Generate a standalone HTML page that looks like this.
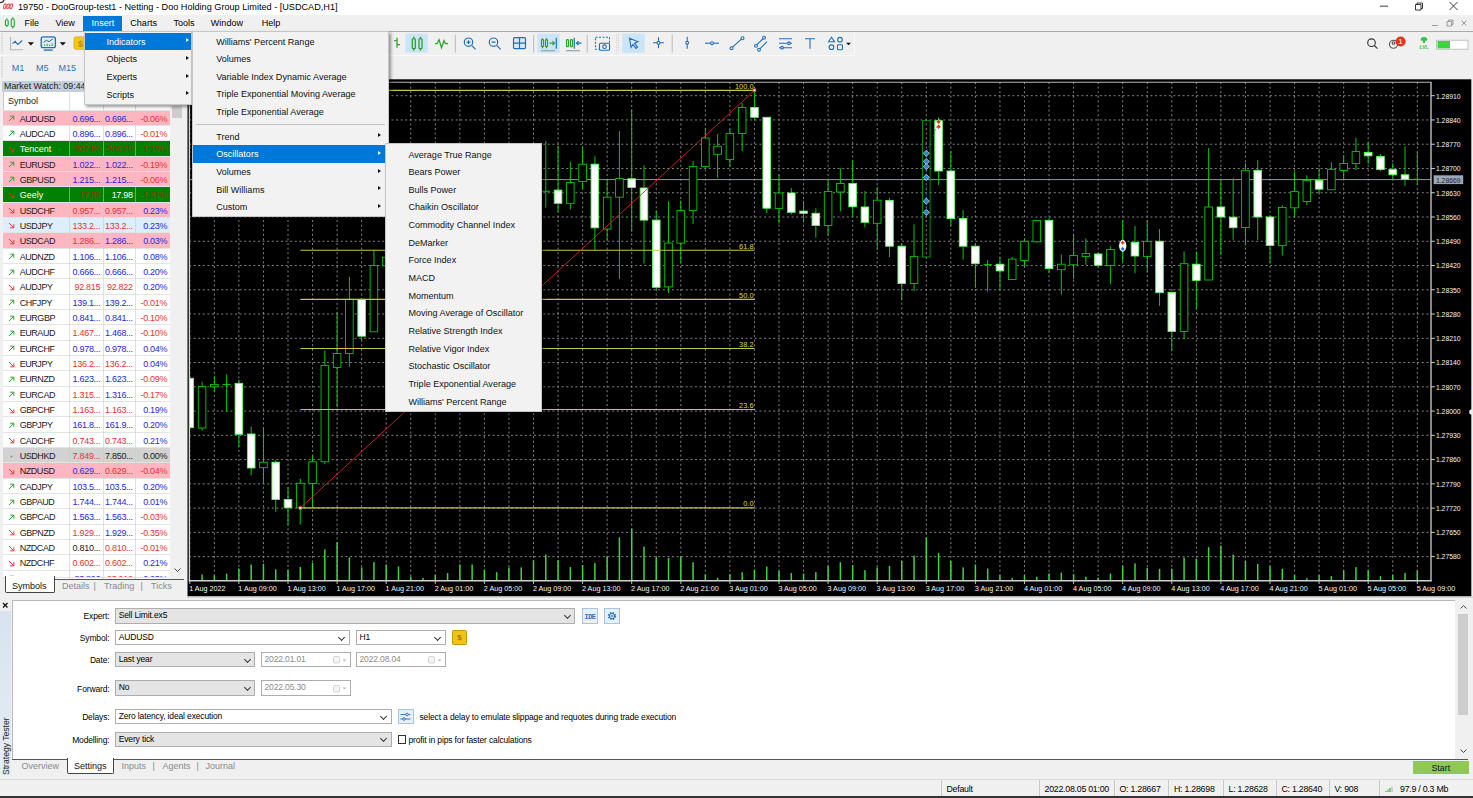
<!DOCTYPE html><html><head><meta charset="utf-8"><title>MetaTrader 5</title><style>

html,body{margin:0;padding:0}
body{width:1473px;height:798px;position:relative;overflow:hidden;background:#f0f0f0;font-family:"Liberation Sans",sans-serif;font-size:9px;color:#000}
div,span{box-sizing:border-box}
.abs{position:absolute}
.t{position:absolute;white-space:nowrap;line-height:12px}
#title{left:0;top:0;width:1473px;height:15px;background:#fff}
#menubar{left:0;top:14.5px;width:1473px;height:16px;background:#f0f0f0}
.mi{position:absolute;top:0;height:16px;line-height:16.5px;font-size:9.05px;white-space:nowrap}
.menu{position:absolute;background:#f2f2f2;border:1px solid #c6c6c6;box-shadow:2px 2px 3px rgba(0,0,0,.4)}
.menu .it{position:absolute;left:0;right:0;height:17.7px;line-height:19px;font-size:9.05px;white-space:nowrap;color:#111}
.menu .it.sel{background:#0078d7;color:#fff}
.menu .it i{position:absolute;right:2.7px;top:5.6px;width:0;height:0;border-left:3.8px solid #111;border-top:2.8px solid transparent;border-bottom:2.8px solid transparent}
.menu .it.sel i{border-left-color:#fff}
.menu.m2 .it i{right:6.9px}
.menu .sep{position:absolute;left:3px;right:3px;height:1px;background:#c4c4c4}
#mw{left:0;top:79px;width:187px;height:518px;background:#f0f0f0}
.mwr{position:absolute;left:2.7px;width:167px;height:15.34px;border-bottom:1px solid #e4e4e4}
.mwr span{position:absolute;top:0;line-height:16.6px;font-size:9px;white-space:nowrap}
.mwr span.s{letter-spacing:-0.45px}
.mwr span.n{letter-spacing:-0.3px}
.cmb{position:absolute;height:15.2px;border:1px solid #adadad;background:#e4e4e4;font-size:8.5px;letter-spacing:-0.14px;line-height:13.2px;padding-left:3px;white-space:nowrap}
.lbl{position:absolute;font-size:8.5px;letter-spacing:-0.14px;line-height:12px;white-space:nowrap;text-align:right}
.chev{position:absolute;right:4.5px;top:3.8px;width:4px;height:4px;border-right:1px solid #333;border-bottom:1px solid #333;transform:rotate(45deg)}
.st{position:absolute;top:0;height:18px;line-height:18px;font-size:8.8px;letter-spacing:-0.25px;white-space:nowrap;border-left:1px solid #c8c8c8;padding-left:5px}

</style></head><body>
<div id="title" class="abs">
<svg class="abs" style="left:0;top:0" width="16" height="14" viewBox="0 0 16 14"><path d="M0 2.6A4.2 4.2 0 0 0 4.2 -0.6" stroke="#333" stroke-width="1.3" fill="none"/><g fill="none" stroke="#e8555a" stroke-width="1.2" transform="skewX(-14)"><ellipse cx="6.4" cy="6.3" rx="1.2" ry="2.4"/><ellipse cx="9.6" cy="6.3" rx="1.2" ry="2.4"/><ellipse cx="12.8" cy="6.3" rx="1.2" ry="2.4"/></g></svg>
<span class="t" id="ttl" style="left:18px;top:1px;font-size:9.15px;color:#000">19750 - DooGroup-test1 - Netting - Doo Holding Group Limited - [USDCAD,H1]</span>
<svg class="abs" style="left:1370px;top:0" width="103" height="14" viewBox="0 0 103 14"><g stroke="#222" stroke-width="0.9" fill="none"><path d="M10 6.2h8"/><path d="M45.5 4.5h5.5v5.5h-5.5z M47 4.5v-1.5h5.5v5.5h-1.5" /><path d="M79.5 2l8 8 M87.5 2l-8 8"/></g></svg>
</div>
<div id="menubar" class="abs">
<svg class="abs" style="left:2px;top:1.5px" width="15" height="14" viewBox="0 0 15 14"><g stroke="#2fa84a" stroke-width="1.2" fill="none"><rect x="3.4" y="4" width="2.8" height="5.6" rx="1"/><path d="M4.8 2.6v1.4M4.8 9.6v1.4"/><rect x="9.3" y="3" width="3" height="7.6" rx="1"/><path d="M10.8 1.2v1.8M10.8 10.6v1.8"/></g></svg>
<span class="mi" style="left:24.4px">File</span>
<span class="mi" style="left:55.4px">View</span>
<span class="mi" style="left:130.3px">Charts</span>
<span class="mi" style="left:173.5px">Tools</span>
<span class="mi" style="left:210.8px">Window</span>
<span class="mi" style="left:261.7px">Help</span>
<span class="mi" style="left:83px;width:39px;background:#0078d7;color:#fff;top:1px;height:15px;line-height:14.5px;padding-left:8.6px">Insert</span>
<svg class="abs" style="left:1425px;top:1px" width="48" height="14" viewBox="0 0 48 14"><g stroke="#9a9a9a" stroke-width="1" fill="none"><path d="M7 9.5h6"/><path d="M22 5.5h4.5v4.5h-4.5z M23.5 5.5v-1.5h4.5v4.5h-1.5"/><path d="M36.5 4.5l5 5M41.5 4.5l-5 5"/></g></svg>
</div>
<div class="abs" style="left:0;top:30.5px;width:1473px;height:1px;background:#a9a9a9"></div>
<div class="abs" style="left:0;top:55px;width:855px;height:1px;background:#fafafa"></div>
<svg class="abs" style="left:0;top:31px" width="1473" height="48" viewBox="0 31 1473 48">
<rect x="405.4" y="33.6" width="22.4" height="19.2" fill="#cce4f7"/>
<rect x="537.3" y="33.6" width="22.4" height="19.2" fill="#cce4f7"/>
<rect x="622.3" y="33.6" width="22.4" height="19.2" fill="#cce4f7"/>
<path d="M2 33.5v19M2 57.5v19.5" stroke="#b0b0b0" stroke-width="1" stroke-dasharray="1 1.3"/>
<g transform="translate(0,0.7)">
<g fill="none" stroke-width="1.1"><path d="M10.6 36.2v12.8h12.6" stroke="#b4b4b4"/><path d="M12.6 43l2.6-2.4 2.6 3.2 4.4-4" stroke="#1f6fb8"/><path d="M27.8 41.6h6.2l-3.1 3.3z" fill="#111" stroke="none"/>
<rect x="41.2" y="36.2" width="14.2" height="10.8" rx="2" fill="#dcecf9" stroke="#1f6fb8" stroke-width="1.3"/><path d="M43.6 41.6l2.8-2 2.6 1.4 4-3" stroke="#34506a" stroke-width="0.9"/><path d="M44.6 45.3v-1.5M47.1 45.3v-2.2M49.6 45.3v-1.3M52.1 45.3v-2.6" stroke="#2ea12e" stroke-width="1"/><path d="M43.8 49.4h9" stroke="#1f6fb8" stroke-width="1.3"/><path d="M59.7 41.6h6.2l-3.1 3.3z" fill="#111" stroke="none"/></g>
<rect x="74" y="36.2" width="13" height="12.4" rx="2" fill="#f5c518" stroke="#d9a80c" stroke-width="0.8"/>
<text x="80.5" y="46" font-size="9" font-weight="bold" fill="#c08a00" text-anchor="middle" font-family='"Liberation Sans",sans-serif'>$</text>
<g fill="none" stroke="#2ea12e" stroke-width="1.3"><path d="M397 37v10M394 40h3M397 44h3"/>
<rect x="412.3" y="38" width="3" height="10" rx="1"/><path d="M413.8 36v2M413.8 48v2"/><rect x="419" y="38" width="3" height="10" rx="1"/><path d="M420.5 36v2M420.5 48v2"/>
<path d="M435 43h2l2-4 2.5 8 2.5-7 1.5 3h2.5"/></g>
<path d="M455.3 34v18M533.7 34v18M587.2 34v18M672.2 34v18" stroke="#b4b4b4" stroke-width="0.9"/>
<path d="M616.5 34v18M618.5 34v18" stroke="#c0c0c0" stroke-width="0.8" stroke-dasharray="1 1.5"/>
<g fill="none" stroke="#1f6fb8" stroke-width="1.2"><circle cx="468.5" cy="41.5" r="4.2"/><path d="M471.6 44.6l4 4M466.5 41.5h4M468.5 39.5v4"/>
<circle cx="493.5" cy="41.5" r="4.2"/><path d="M496.6 44.6l4 4M491.5 41.5h4"/>
<rect x="513.5" y="37" width="12" height="11" rx="1.2" fill="#d5e9f8"/><path d="M519.5 37v11M513.5 42.5h12"/></g>
<g fill="none" stroke="#2ea12e" stroke-width="1.2"><rect x="541.5" y="39" width="2" height="7" rx="0.8"/><path d="M542.5 37.5v1.5M542.5 46v1.5"/><rect x="545.5" y="39" width="2" height="7" rx="0.8"/><path d="M546.5 37.5v1.5M546.5 46v1.5"/><path d="M549.5 42.5h5M552.5 40.5l2 2-2 2" /><path d="M556.3 37v11" stroke="#1f6fb8"/><path d="M541 50h14" stroke="#8aa"/>
<rect x="566.5" y="39" width="2" height="7" rx="0.8"/><rect x="570.5" y="39" width="2" height="7" rx="0.8"/><path d="M574.3 37v11" stroke="#1f6fb8"/><path d="M576.5 42.5h5M578.5 40.5l-2 2 2 2" stroke="#1f6fb8"/><path d="M566 50h14" stroke="#8aa"/></g>
<g fill="none" stroke="#1f6fb8" stroke-width="1.1"><rect x="595.5" y="36.5" width="14" height="12" stroke-dasharray="2 1.5"/><rect x="599.5" y="42.5" width="10" height="7" rx="1" fill="#f0f0f0"/><circle cx="604.5" cy="46" r="1.8"/></g>
<g fill="none" stroke="#1f6fb8" stroke-width="1.1"><path d="M629.5 37.5l8.5 3.5-3.5 1.5 3 4-1.5 1.2-3-4-2 3z" fill="#d5e9f8"/><path d="M658.5 36.5v11M653 42h11"/><circle cx="658.5" cy="42" r="1.5" fill="#f0f0f0"/>
<path d="M687.2 36v12"/><circle cx="687.2" cy="42" r="1.4" fill="#f0f0f0"/><path d="M705 42.5h14"/><circle cx="712" cy="42.5" r="1.4" fill="#f0f0f0"/>
<path d="M731.5 47.5l11-10"/><circle cx="731.5" cy="47.5" r="1.5" fill="#f0f0f0"/><circle cx="742.5" cy="37.5" r="1.5" fill="#f0f0f0"/>
<path d="M756 45l8-8M759 49l8-8"/><circle cx="756" cy="45" r="1.4" fill="#f0f0f0"/><circle cx="764" cy="37" r="1.4" fill="#f0f0f0"/><circle cx="759" cy="49" r="1.4" fill="#f0f0f0"/>
<path d="M779 38h13M779 42.5h13M779 47h13"/><circle cx="789" cy="42.5" r="1.3" fill="#f0f0f0"/><circle cx="782" cy="47" r="1.3" fill="#f0f0f0"/>
<path d="M805 38h10M810 38v10"/>
<path d="M828.5 41l3-4.5 3 4.5z"/><circle cx="840" cy="39" r="2.3"/><circle cx="831.5" cy="46.5" r="2.3"/><rect x="837.5" y="44" width="5" height="5" rx="0.8"/></g>
<path d="M846 42l2.5 2.5 2.5-2.5z" fill="#111"/>
<path d="M854.5 32v22" stroke="#fafafa" stroke-width="1"/>
<g fill="none" stroke="#333" stroke-width="1.1"><circle cx="1371.5" cy="42" r="3.8"/><path d="M1374.3 44.8l3.2 3.2"/><circle cx="1393.5" cy="43.5" r="4" stroke="#555"/><circle cx="1393.5" cy="42.3" r="1.3" stroke="#555"/></g>
<circle cx="1400.6" cy="40.8" r="5.1" fill="#e8321e"/><text x="1400.5" y="43.7" font-size="8" fill="#fff" text-anchor="middle" font-family='"Liberation Sans",sans-serif'>1</text>
<path d="M1424 36.2c-2 0-3.4 1.3-3.4 2.9 0 .5.3.9.8.9h1.5v2.4h2.2v-2.4h1.5c.5 0 .8-.4.8-.9 0-1.6-1.4-2.9-3.4-2.9z" fill="#35c24a"/><text x="1424" y="48.3" font-size="5" fill="#35c24a" text-anchor="middle" font-weight="bold" font-family='"Liberation Sans",sans-serif'>LVL</text>
<rect x="1436.5" y="39.5" width="31.5" height="9" fill="#fff" stroke="#b5b5b5" stroke-width="0.8"/><rect x="1437.5" y="40.3" width="12.5" height="7.4" fill="#3fd23f"/>
</g></svg>
<span class="t" style="left:11.8px;top:61.6px;font-size:9.05px;color:#2476b6">M1</span>
<span class="t" style="left:36px;top:61.6px;font-size:9.05px;color:#2476b6">M5</span>
<span class="t" style="left:58.5px;top:61.6px;font-size:9.05px;color:#2476b6">M15</span>
<div id="mw" class="abs">
<div class="abs" style="left:2px;top:1.8px;width:184px;height:11.6px;background:#c3cfdc"></div>
<span class="t" style="left:4px;top:0.7px;font-size:8.9px;color:#222">Market Watch: 09:44:22</span>
<div class="abs" style="left:2.7px;top:13.3px;width:181px;height:487px;background:#fff;border-left:1px solid #c8c8c8"></div>
<span class="t" style="left:8px;top:16px;font-size:9px;color:#222">Symbol</span>
<div class="abs" style="left:2.7px;top:31px;width:167px;height:1px;background:#e4e4e4"></div>
<div class="mwr" style="top:31.60px;background:#ffb6c1;height:15.34px;overflow:hidden"><svg class="abs" style="left:5.5px;top:4.5px" width="7" height="7" viewBox="0 0 7 7"><path d="M1 6L5.6 1.4M2.2 1.2h3.6v3.6" stroke="#2ea12e" stroke-width="1" fill="none"/></svg><span class="s" style="left:17px;color:#1a1a1a">AUDUSD</span><span class="n" style="right:69.5px;color:#2828dc">0.696...</span><span class="n" style="right:37px;color:#2828dc">0.696...</span><span class="n" style="right:2.5px;color:#e63232">-0.06%</span></div>
<div class="mwr" style="top:46.94px;background:#ffffff;height:15.34px;overflow:hidden"><svg class="abs" style="left:5.5px;top:4.5px" width="7" height="7" viewBox="0 0 7 7"><path d="M1 6L5.6 1.4M2.2 1.2h3.6v3.6" stroke="#2ea12e" stroke-width="1" fill="none"/></svg><span class="s" style="left:17px;color:#1a1a1a">AUDCAD</span><span class="n" style="right:69.5px;color:#2828dc">0.896...</span><span class="n" style="right:37px;color:#2828dc">0.896...</span><span class="n" style="right:2.5px;color:#e63232">-0.01%</span></div>
<div class="mwr" style="top:62.28px;background:#008000;height:15.34px;overflow:hidden"><svg class="abs" style="left:5.5px;top:4.5px" width="7" height="7" viewBox="0 0 7 7"><path d="M1 1L5.6 5.6M2.2 5.8h3.6v-3.6" stroke="#a8500f" stroke-width="1" fill="none"/></svg><span class="" style="left:17px;color:#fff">Tencent</span><span class="n" style="right:69.5px;color:#8b3a0e">307.80</span><span class="n" style="right:37px;color:#8b3a0e">308.20</span><span class="n" style="right:2.5px;color:#8b3a0e">-1.19%</span></div>
<div class="mwr" style="top:77.62px;background:#ffb6c1;height:15.34px;overflow:hidden"><svg class="abs" style="left:5.5px;top:4.5px" width="7" height="7" viewBox="0 0 7 7"><path d="M1 6L5.6 1.4M2.2 1.2h3.6v3.6" stroke="#2ea12e" stroke-width="1" fill="none"/></svg><span class="s" style="left:17px;color:#1a1a1a">EURUSD</span><span class="n" style="right:69.5px;color:#2828dc">1.022...</span><span class="n" style="right:37px;color:#2828dc">1.022...</span><span class="n" style="right:2.5px;color:#e63232">-0.19%</span></div>
<div class="mwr" style="top:92.96px;background:#ffb6c1;height:15.34px;overflow:hidden"><svg class="abs" style="left:5.5px;top:4.5px" width="7" height="7" viewBox="0 0 7 7"><path d="M1 6L5.6 1.4M2.2 1.2h3.6v3.6" stroke="#2ea12e" stroke-width="1" fill="none"/></svg><span class="s" style="left:17px;color:#1a1a1a">GBPUSD</span><span class="n" style="right:69.5px;color:#2828dc">1.215...</span><span class="n" style="right:37px;color:#2828dc">1.215...</span><span class="n" style="right:2.5px;color:#e63232">-0.06%</span></div>
<div class="mwr" style="top:108.30px;background:#008000;height:15.34px;overflow:hidden"><svg class="abs" style="left:5.5px;top:4.5px" width="7" height="7" viewBox="0 0 7 7"><path d="M1 1L5.6 5.6M2.2 5.8h3.6v-3.6" stroke="#a8500f" stroke-width="1" fill="none"/></svg><span class="" style="left:17px;color:#fff">Geely</span><span class="n" style="right:69.5px;color:#8b3a0e">17.86</span><span class="n" style="right:37px;color:#ffffff">17.98</span><span class="n" style="right:2.5px;color:#8b3a0e">-1.81%</span></div>
<div class="mwr" style="top:123.64px;background:#ffb6c1;height:15.34px;overflow:hidden"><svg class="abs" style="left:5.5px;top:4.5px" width="7" height="7" viewBox="0 0 7 7"><path d="M1 1L5.6 5.6M2.2 5.8h3.6v-3.6" stroke="#e03c3c" stroke-width="1" fill="none"/></svg><span class="s" style="left:17px;color:#1a1a1a">USDCHF</span><span class="n" style="right:69.5px;color:#e63232">0.957...</span><span class="n" style="right:37px;color:#e63232">0.957...</span><span class="n" style="right:2.5px;color:#2828dc">0.23%</span></div>
<div class="mwr" style="top:138.98px;background:#ddeeff;height:15.34px;overflow:hidden"><svg class="abs" style="left:5.5px;top:4.5px" width="7" height="7" viewBox="0 0 7 7"><path d="M1 1L5.6 5.6M2.2 5.8h3.6v-3.6" stroke="#e03c3c" stroke-width="1" fill="none"/></svg><span class="s" style="left:17px;color:#1a1a1a">USDJPY</span><span class="n" style="right:69.5px;color:#e63232">133.2...</span><span class="n" style="right:37px;color:#e63232">133.2...</span><span class="n" style="right:2.5px;color:#2828dc">0.23%</span></div>
<div class="mwr" style="top:154.32px;background:#ffb6c1;height:15.34px;overflow:hidden"><svg class="abs" style="left:5.5px;top:4.5px" width="7" height="7" viewBox="0 0 7 7"><path d="M1 1L5.6 5.6M2.2 5.8h3.6v-3.6" stroke="#e03c3c" stroke-width="1" fill="none"/></svg><span class="s" style="left:17px;color:#1a1a1a">USDCAD</span><span class="n" style="right:69.5px;color:#e63232">1.286...</span><span class="n" style="right:37px;color:#2828dc">1.286...</span><span class="n" style="right:2.5px;color:#2828dc">0.03%</span></div>
<div class="mwr" style="top:169.66px;background:#ffffff;height:15.34px;overflow:hidden"><svg class="abs" style="left:5.5px;top:4.5px" width="7" height="7" viewBox="0 0 7 7"><path d="M1 6L5.6 1.4M2.2 1.2h3.6v3.6" stroke="#2ea12e" stroke-width="1" fill="none"/></svg><span class="s" style="left:17px;color:#1a1a1a">AUDNZD</span><span class="n" style="right:69.5px;color:#2828dc">1.106...</span><span class="n" style="right:37px;color:#2828dc">1.106...</span><span class="n" style="right:2.5px;color:#2828dc">0.08%</span></div>
<div class="mwr" style="top:185.00px;background:#ffffff;height:15.34px;overflow:hidden"><svg class="abs" style="left:5.5px;top:4.5px" width="7" height="7" viewBox="0 0 7 7"><path d="M1 6L5.6 1.4M2.2 1.2h3.6v3.6" stroke="#2ea12e" stroke-width="1" fill="none"/></svg><span class="s" style="left:17px;color:#1a1a1a">AUDCHF</span><span class="n" style="right:69.5px;color:#2828dc">0.666...</span><span class="n" style="right:37px;color:#2828dc">0.666...</span><span class="n" style="right:2.5px;color:#2828dc">0.20%</span></div>
<div class="mwr" style="top:200.34px;background:#ffffff;height:15.34px;overflow:hidden"><svg class="abs" style="left:5.5px;top:4.5px" width="7" height="7" viewBox="0 0 7 7"><path d="M1 1L5.6 5.6M2.2 5.8h3.6v-3.6" stroke="#e03c3c" stroke-width="1" fill="none"/></svg><span class="s" style="left:17px;color:#1a1a1a">AUDJPY</span><span class="n" style="right:69.5px;color:#e63232">92.815</span><span class="n" style="right:37px;color:#e63232">92.822</span><span class="n" style="right:2.5px;color:#2828dc">0.20%</span></div>
<div class="mwr" style="top:215.68px;background:#ffffff;height:15.34px;overflow:hidden"><svg class="abs" style="left:5.5px;top:4.5px" width="7" height="7" viewBox="0 0 7 7"><path d="M1 6L5.6 1.4M2.2 1.2h3.6v3.6" stroke="#2ea12e" stroke-width="1" fill="none"/></svg><span class="s" style="left:17px;color:#1a1a1a">CHFJPY</span><span class="n" style="right:69.5px;color:#2828dc">139.1...</span><span class="n" style="right:37px;color:#2828dc">139.2...</span><span class="n" style="right:2.5px;color:#e63232">-0.01%</span></div>
<div class="mwr" style="top:231.02px;background:#ffffff;height:15.34px;overflow:hidden"><svg class="abs" style="left:5.5px;top:4.5px" width="7" height="7" viewBox="0 0 7 7"><path d="M1 6L5.6 1.4M2.2 1.2h3.6v3.6" stroke="#2ea12e" stroke-width="1" fill="none"/></svg><span class="s" style="left:17px;color:#1a1a1a">EURGBP</span><span class="n" style="right:69.5px;color:#2828dc">0.841...</span><span class="n" style="right:37px;color:#2828dc">0.841...</span><span class="n" style="right:2.5px;color:#e63232">-0.10%</span></div>
<div class="mwr" style="top:246.36px;background:#ffffff;height:15.34px;overflow:hidden"><svg class="abs" style="left:5.5px;top:4.5px" width="7" height="7" viewBox="0 0 7 7"><path d="M1 6L5.6 1.4M2.2 1.2h3.6v3.6" stroke="#2ea12e" stroke-width="1" fill="none"/></svg><span class="s" style="left:17px;color:#1a1a1a">EURAUD</span><span class="n" style="right:69.5px;color:#e63232">1.467...</span><span class="n" style="right:37px;color:#2828dc">1.468...</span><span class="n" style="right:2.5px;color:#e63232">-0.10%</span></div>
<div class="mwr" style="top:261.70px;background:#ffffff;height:15.34px;overflow:hidden"><svg class="abs" style="left:5.5px;top:4.5px" width="7" height="7" viewBox="0 0 7 7"><path d="M1 6L5.6 1.4M2.2 1.2h3.6v3.6" stroke="#2ea12e" stroke-width="1" fill="none"/></svg><span class="s" style="left:17px;color:#1a1a1a">EURCHF</span><span class="n" style="right:69.5px;color:#2828dc">0.978...</span><span class="n" style="right:37px;color:#2828dc">0.978...</span><span class="n" style="right:2.5px;color:#2828dc">0.04%</span></div>
<div class="mwr" style="top:277.04px;background:#ffffff;height:15.34px;overflow:hidden"><svg class="abs" style="left:5.5px;top:4.5px" width="7" height="7" viewBox="0 0 7 7"><path d="M1 1L5.6 5.6M2.2 5.8h3.6v-3.6" stroke="#e03c3c" stroke-width="1" fill="none"/></svg><span class="s" style="left:17px;color:#1a1a1a">EURJPY</span><span class="n" style="right:69.5px;color:#e63232">136.2...</span><span class="n" style="right:37px;color:#e63232">136.2...</span><span class="n" style="right:2.5px;color:#2828dc">0.04%</span></div>
<div class="mwr" style="top:292.38px;background:#ffffff;height:15.34px;overflow:hidden"><svg class="abs" style="left:5.5px;top:4.5px" width="7" height="7" viewBox="0 0 7 7"><path d="M1 6L5.6 1.4M2.2 1.2h3.6v3.6" stroke="#2ea12e" stroke-width="1" fill="none"/></svg><span class="s" style="left:17px;color:#1a1a1a">EURNZD</span><span class="n" style="right:69.5px;color:#2828dc">1.623...</span><span class="n" style="right:37px;color:#2828dc">1.623...</span><span class="n" style="right:2.5px;color:#e63232">-0.09%</span></div>
<div class="mwr" style="top:307.72px;background:#ffffff;height:15.34px;overflow:hidden"><svg class="abs" style="left:5.5px;top:4.5px" width="7" height="7" viewBox="0 0 7 7"><path d="M1 6L5.6 1.4M2.2 1.2h3.6v3.6" stroke="#2ea12e" stroke-width="1" fill="none"/></svg><span class="s" style="left:17px;color:#1a1a1a">EURCAD</span><span class="n" style="right:69.5px;color:#e63232">1.315...</span><span class="n" style="right:37px;color:#2828dc">1.316...</span><span class="n" style="right:2.5px;color:#e63232">-0.17%</span></div>
<div class="mwr" style="top:323.06px;background:#ffffff;height:15.34px;overflow:hidden"><svg class="abs" style="left:5.5px;top:4.5px" width="7" height="7" viewBox="0 0 7 7"><path d="M1 1L5.6 5.6M2.2 5.8h3.6v-3.6" stroke="#e03c3c" stroke-width="1" fill="none"/></svg><span class="s" style="left:17px;color:#1a1a1a">GBPCHF</span><span class="n" style="right:69.5px;color:#e63232">1.163...</span><span class="n" style="right:37px;color:#e63232">1.163...</span><span class="n" style="right:2.5px;color:#2828dc">0.19%</span></div>
<div class="mwr" style="top:338.40px;background:#ffffff;height:15.34px;overflow:hidden"><svg class="abs" style="left:5.5px;top:4.5px" width="7" height="7" viewBox="0 0 7 7"><path d="M1 6L5.6 1.4M2.2 1.2h3.6v3.6" stroke="#2ea12e" stroke-width="1" fill="none"/></svg><span class="s" style="left:17px;color:#1a1a1a">GBPJPY</span><span class="n" style="right:69.5px;color:#2828dc">161.8...</span><span class="n" style="right:37px;color:#2828dc">161.9...</span><span class="n" style="right:2.5px;color:#2828dc">0.20%</span></div>
<div class="mwr" style="top:353.74px;background:#ffffff;height:15.34px;overflow:hidden"><svg class="abs" style="left:5.5px;top:4.5px" width="7" height="7" viewBox="0 0 7 7"><path d="M1 1L5.6 5.6M2.2 5.8h3.6v-3.6" stroke="#e03c3c" stroke-width="1" fill="none"/></svg><span class="s" style="left:17px;color:#1a1a1a">CADCHF</span><span class="n" style="right:69.5px;color:#e63232">0.743...</span><span class="n" style="right:37px;color:#e63232">0.743...</span><span class="n" style="right:2.5px;color:#2828dc">0.21%</span></div>
<div class="mwr" style="top:369.08px;background:#d2d2d2;height:15.34px;overflow:hidden"><svg class="abs" style="left:5.5px;top:4.5px" width="7" height="7" viewBox="0 0 7 7"><circle cx="3.5" cy="3.5" r="1" fill="#888"/></svg><span class="s" style="left:17px;color:#1a1a1a">USDHKD</span><span class="n" style="right:69.5px;color:#e63232">7.849...</span><span class="n" style="right:37px;color:#202020">7.850...</span><span class="n" style="right:2.5px;color:#202020">0.00%</span></div>
<div class="mwr" style="top:384.42px;background:#ffb6c1;height:15.34px;overflow:hidden"><svg class="abs" style="left:5.5px;top:4.5px" width="7" height="7" viewBox="0 0 7 7"><path d="M1 1L5.6 5.6M2.2 5.8h3.6v-3.6" stroke="#e03c3c" stroke-width="1" fill="none"/></svg><span class="s" style="left:17px;color:#1a1a1a">NZDUSD</span><span class="n" style="right:69.5px;color:#2828dc">0.629...</span><span class="n" style="right:37px;color:#e63232">0.629...</span><span class="n" style="right:2.5px;color:#e63232">-0.04%</span></div>
<div class="mwr" style="top:399.76px;background:#ffffff;height:15.34px;overflow:hidden"><svg class="abs" style="left:5.5px;top:4.5px" width="7" height="7" viewBox="0 0 7 7"><path d="M1 6L5.6 1.4M2.2 1.2h3.6v3.6" stroke="#2ea12e" stroke-width="1" fill="none"/></svg><span class="s" style="left:17px;color:#1a1a1a">CADJPY</span><span class="n" style="right:69.5px;color:#2828dc">103.5...</span><span class="n" style="right:37px;color:#2828dc">103.5...</span><span class="n" style="right:2.5px;color:#2828dc">0.20%</span></div>
<div class="mwr" style="top:415.10px;background:#ffffff;height:15.34px;overflow:hidden"><svg class="abs" style="left:5.5px;top:4.5px" width="7" height="7" viewBox="0 0 7 7"><path d="M1 6L5.6 1.4M2.2 1.2h3.6v3.6" stroke="#2ea12e" stroke-width="1" fill="none"/></svg><span class="s" style="left:17px;color:#1a1a1a">GBPAUD</span><span class="n" style="right:69.5px;color:#2828dc">1.744...</span><span class="n" style="right:37px;color:#2828dc">1.744...</span><span class="n" style="right:2.5px;color:#2828dc">0.01%</span></div>
<div class="mwr" style="top:430.44px;background:#ffffff;height:15.34px;overflow:hidden"><svg class="abs" style="left:5.5px;top:4.5px" width="7" height="7" viewBox="0 0 7 7"><path d="M1 6L5.6 1.4M2.2 1.2h3.6v3.6" stroke="#2ea12e" stroke-width="1" fill="none"/></svg><span class="s" style="left:17px;color:#1a1a1a">GBPCAD</span><span class="n" style="right:69.5px;color:#2828dc">1.563...</span><span class="n" style="right:37px;color:#2828dc">1.563...</span><span class="n" style="right:2.5px;color:#e63232">-0.03%</span></div>
<div class="mwr" style="top:445.78px;background:#ffffff;height:15.34px;overflow:hidden"><svg class="abs" style="left:5.5px;top:4.5px" width="7" height="7" viewBox="0 0 7 7"><path d="M1 1L5.6 5.6M2.2 5.8h3.6v-3.6" stroke="#e03c3c" stroke-width="1" fill="none"/></svg><span class="s" style="left:17px;color:#1a1a1a">GBPNZD</span><span class="n" style="right:69.5px;color:#e63232">1.929...</span><span class="n" style="right:37px;color:#2828dc">1.929...</span><span class="n" style="right:2.5px;color:#e63232">-0.35%</span></div>
<div class="mwr" style="top:461.12px;background:#ffffff;height:15.34px;overflow:hidden"><svg class="abs" style="left:5.5px;top:4.5px" width="7" height="7" viewBox="0 0 7 7"><path d="M1 1L5.6 5.6M2.2 5.8h3.6v-3.6" stroke="#e03c3c" stroke-width="1" fill="none"/></svg><span class="s" style="left:17px;color:#1a1a1a">NZDCAD</span><span class="n" style="right:69.5px;color:#202020">0.810...</span><span class="n" style="right:37px;color:#e63232">0.810...</span><span class="n" style="right:2.5px;color:#e63232">-0.01%</span></div>
<div class="mwr" style="top:476.46px;background:#ffffff;height:15.34px;overflow:hidden"><svg class="abs" style="left:5.5px;top:4.5px" width="7" height="7" viewBox="0 0 7 7"><path d="M1 1L5.6 5.6M2.2 5.8h3.6v-3.6" stroke="#e03c3c" stroke-width="1" fill="none"/></svg><span class="s" style="left:17px;color:#1a1a1a">NZDCHF</span><span class="n" style="right:69.5px;color:#e63232">0.602...</span><span class="n" style="right:37px;color:#e63232">0.602...</span><span class="n" style="right:2.5px;color:#2828dc">0.21%</span></div>
<div class="mwr" style="top:491.80px;background:#ffffff;height:7.70px;overflow:hidden"><svg class="abs" style="left:5.5px;top:4.5px" width="7" height="7" viewBox="0 0 7 7"><path d="M1 6L5.6 1.4M2.2 1.2h3.6v3.6" stroke="#2ea12e" stroke-width="1" fill="none"/></svg><span class="s" style="left:17px;color:#1a1a1a">NZDJPY</span><span class="n" style="right:69.5px;color:#2828dc">83.896</span><span class="n" style="right:37px;color:#e63232">83.912</span><span class="n" style="right:2.5px;color:#2828dc">0.23%</span></div>
<div class="abs" style="left:69.2px;top:13.3px;width:1px;height:487px;background:rgba(200,200,200,.55)"></div>
<div class="abs" style="left:102.5px;top:13.3px;width:1px;height:487px;background:rgba(200,200,200,.55)"></div>
<div class="abs" style="left:135.1px;top:13.3px;width:1px;height:487px;background:rgba(200,200,200,.55)"></div>
<div class="abs" style="left:169.7px;top:13.3px;width:14px;height:487px;background:#f0f0f0"></div>
<div class="abs" style="left:171.8px;top:27px;width:10.2px;height:11.5px;background:#cdcdcd"></div>
<svg class="abs" style="left:172.5px;top:488px" width="9" height="6" viewBox="0 0 9 6"><path d="M1.5 1.5l3 3 3-3" stroke="#444" stroke-width="1" fill="none"/></svg>
<div class="abs" style="left:53px;top:499.6px;width:130.7px;height:1.2px;background:#555"></div>
<div class="abs" style="left:4.5px;top:497px;width:50px;height:16.5px;background:#fff;border:1px solid #444;border-top:none;border-radius:0 0 2px 2px"></div>
<span class="t" style="left:12px;top:500.5px;font-size:9px;color:#111">Symbols</span>
<span class="t" style="left:62px;top:500.5px;font-size:9px;color:#8a8a8a">Details</span>
<span class="t" style="left:93.5px;top:500.5px;font-size:9px;color:#8a8a8a">|</span>
<span class="t" style="left:104px;top:500.5px;font-size:9px;color:#8a8a8a">Trading</span>
<span class="t" style="left:140.5px;top:500.5px;font-size:9px;color:#8a8a8a">|</span>
<span class="t" style="left:151px;top:500.5px;font-size:9px;color:#8a8a8a">Ticks</span>
</div>
<svg class="abs" style="left:187px;top:78px" width="1286" height="520" viewBox="187 78 1286 520">
<rect x="187" y="78" width="1286" height="520" fill="#f0f0f0"/>
<rect x="187.5" y="79.3" width="1283.8" height="517.2" fill="#000"/>
<rect x="187" y="596.4" width="1286" height="1.6" fill="#d8d8d8"/>
<clipPath id="cp"><rect x="189.4" y="82" width="1241.5" height="498.5"/></clipPath>
<g clip-path="url(#cp)">
<path d="M189 95.70H1431" stroke="#8e929a" stroke-width="0.9" stroke-dasharray="2 2.6" />
<path d="M189 119.96H1431" stroke="#8e929a" stroke-width="0.9" stroke-dasharray="2 2.6" />
<path d="M189 144.22H1431" stroke="#8e929a" stroke-width="0.9" stroke-dasharray="2 2.6" />
<path d="M189 168.48H1431" stroke="#8e929a" stroke-width="0.9" stroke-dasharray="2 2.6" />
<path d="M189 192.74H1431" stroke="#8e929a" stroke-width="0.9" stroke-dasharray="2 2.6" />
<path d="M189 217.00H1431" stroke="#8e929a" stroke-width="0.9" stroke-dasharray="2 2.6" />
<path d="M189 241.26H1431" stroke="#8e929a" stroke-width="0.9" stroke-dasharray="2 2.6" />
<path d="M189 265.52H1431" stroke="#8e929a" stroke-width="0.9" stroke-dasharray="2 2.6" />
<path d="M189 289.78H1431" stroke="#8e929a" stroke-width="0.9" stroke-dasharray="2 2.6" />
<path d="M189 314.04H1431" stroke="#8e929a" stroke-width="0.9" stroke-dasharray="2 2.6" />
<path d="M189 338.30H1431" stroke="#8e929a" stroke-width="0.9" stroke-dasharray="2 2.6" />
<path d="M189 362.56H1431" stroke="#8e929a" stroke-width="0.9" stroke-dasharray="2 2.6" />
<path d="M189 386.82H1431" stroke="#8e929a" stroke-width="0.9" stroke-dasharray="2 2.6" />
<path d="M189 411.08H1431" stroke="#8e929a" stroke-width="0.9" stroke-dasharray="2 2.6" />
<path d="M189 435.34H1431" stroke="#8e929a" stroke-width="0.9" stroke-dasharray="2 2.6" />
<path d="M189 459.60H1431" stroke="#8e929a" stroke-width="0.9" stroke-dasharray="2 2.6" />
<path d="M189 483.86H1431" stroke="#8e929a" stroke-width="0.9" stroke-dasharray="2 2.6" />
<path d="M189 508.12H1431" stroke="#8e929a" stroke-width="0.9" stroke-dasharray="2 2.6" />
<path d="M189 532.38H1431" stroke="#8e929a" stroke-width="0.9" stroke-dasharray="2 2.6" />
<path d="M189 556.64H1431" stroke="#8e929a" stroke-width="0.9" stroke-dasharray="2 2.6" />
<path d="M189 580.90H1431" stroke="#8e929a" stroke-width="0.9" stroke-dasharray="2 2.6" />
<path d="M189.80 82V581" stroke="#8e929a" stroke-width="0.9" stroke-dasharray="2 2.6"/>
<path d="M214.35 82V581" stroke="#8e929a" stroke-width="0.9" stroke-dasharray="2 2.6"/>
<path d="M238.90 82V581" stroke="#8e929a" stroke-width="0.9" stroke-dasharray="2 2.6"/>
<path d="M263.45 82V581" stroke="#8e929a" stroke-width="0.9" stroke-dasharray="2 2.6"/>
<path d="M288.00 82V581" stroke="#8e929a" stroke-width="0.9" stroke-dasharray="2 2.6"/>
<path d="M312.55 82V581" stroke="#8e929a" stroke-width="0.9" stroke-dasharray="2 2.6"/>
<path d="M337.10 82V581" stroke="#8e929a" stroke-width="0.9" stroke-dasharray="2 2.6"/>
<path d="M361.65 82V581" stroke="#8e929a" stroke-width="0.9" stroke-dasharray="2 2.6"/>
<path d="M386.20 82V581" stroke="#8e929a" stroke-width="0.9" stroke-dasharray="2 2.6"/>
<path d="M410.75 82V581" stroke="#8e929a" stroke-width="0.9" stroke-dasharray="2 2.6"/>
<path d="M435.30 82V581" stroke="#8e929a" stroke-width="0.9" stroke-dasharray="2 2.6"/>
<path d="M459.85 82V581" stroke="#8e929a" stroke-width="0.9" stroke-dasharray="2 2.6"/>
<path d="M484.40 82V581" stroke="#8e929a" stroke-width="0.9" stroke-dasharray="2 2.6"/>
<path d="M508.95 82V581" stroke="#8e929a" stroke-width="0.9" stroke-dasharray="2 2.6"/>
<path d="M533.50 82V581" stroke="#8e929a" stroke-width="0.9" stroke-dasharray="2 2.6"/>
<path d="M558.05 82V581" stroke="#8e929a" stroke-width="0.9" stroke-dasharray="2 2.6"/>
<path d="M582.60 82V581" stroke="#8e929a" stroke-width="0.9" stroke-dasharray="2 2.6"/>
<path d="M607.15 82V581" stroke="#8e929a" stroke-width="0.9" stroke-dasharray="2 2.6"/>
<path d="M631.70 82V581" stroke="#8e929a" stroke-width="0.9" stroke-dasharray="2 2.6"/>
<path d="M656.25 82V581" stroke="#8e929a" stroke-width="0.9" stroke-dasharray="2 2.6"/>
<path d="M680.80 82V581" stroke="#8e929a" stroke-width="0.9" stroke-dasharray="2 2.6"/>
<path d="M705.35 82V581" stroke="#8e929a" stroke-width="0.9" stroke-dasharray="2 2.6"/>
<path d="M729.90 82V581" stroke="#8e929a" stroke-width="0.9" stroke-dasharray="2 2.6"/>
<path d="M754.45 82V581" stroke="#8e929a" stroke-width="0.9" stroke-dasharray="2 2.6"/>
<path d="M779.00 82V581" stroke="#8e929a" stroke-width="0.9" stroke-dasharray="2 2.6"/>
<path d="M803.55 82V581" stroke="#8e929a" stroke-width="0.9" stroke-dasharray="2 2.6"/>
<path d="M828.10 82V581" stroke="#8e929a" stroke-width="0.9" stroke-dasharray="2 2.6"/>
<path d="M852.65 82V581" stroke="#8e929a" stroke-width="0.9" stroke-dasharray="2 2.6"/>
<path d="M877.20 82V581" stroke="#8e929a" stroke-width="0.9" stroke-dasharray="2 2.6"/>
<path d="M901.75 82V581" stroke="#8e929a" stroke-width="0.9" stroke-dasharray="2 2.6"/>
<path d="M926.30 82V581" stroke="#8e929a" stroke-width="0.9" stroke-dasharray="2 2.6"/>
<path d="M950.85 82V581" stroke="#8e929a" stroke-width="0.9" stroke-dasharray="2 2.6"/>
<path d="M975.40 82V581" stroke="#8e929a" stroke-width="0.9" stroke-dasharray="2 2.6"/>
<path d="M999.95 82V581" stroke="#8e929a" stroke-width="0.9" stroke-dasharray="2 2.6"/>
<path d="M1024.50 82V581" stroke="#8e929a" stroke-width="0.9" stroke-dasharray="2 2.6"/>
<path d="M1049.05 82V581" stroke="#8e929a" stroke-width="0.9" stroke-dasharray="2 2.6"/>
<path d="M1073.60 82V581" stroke="#8e929a" stroke-width="0.9" stroke-dasharray="2 2.6"/>
<path d="M1098.15 82V581" stroke="#8e929a" stroke-width="0.9" stroke-dasharray="2 2.6"/>
<path d="M1122.70 82V581" stroke="#8e929a" stroke-width="0.9" stroke-dasharray="2 2.6"/>
<path d="M1147.25 82V581" stroke="#8e929a" stroke-width="0.9" stroke-dasharray="2 2.6"/>
<path d="M1171.80 82V581" stroke="#8e929a" stroke-width="0.9" stroke-dasharray="2 2.6"/>
<path d="M1196.35 82V581" stroke="#8e929a" stroke-width="0.9" stroke-dasharray="2 2.6"/>
<path d="M1220.90 82V581" stroke="#8e929a" stroke-width="0.9" stroke-dasharray="2 2.6"/>
<path d="M1245.45 82V581" stroke="#8e929a" stroke-width="0.9" stroke-dasharray="2 2.6"/>
<path d="M1270.00 82V581" stroke="#8e929a" stroke-width="0.9" stroke-dasharray="2 2.6"/>
<path d="M1294.55 82V581" stroke="#8e929a" stroke-width="0.9" stroke-dasharray="2 2.6"/>
<path d="M1319.10 82V581" stroke="#8e929a" stroke-width="0.9" stroke-dasharray="2 2.6"/>
<path d="M1343.65 82V581" stroke="#8e929a" stroke-width="0.9" stroke-dasharray="2 2.6"/>
<path d="M1368.20 82V581" stroke="#8e929a" stroke-width="0.9" stroke-dasharray="2 2.6"/>
<path d="M1392.75 82V581" stroke="#8e929a" stroke-width="0.9" stroke-dasharray="2 2.6"/>
<path d="M1417.30 82V581" stroke="#8e929a" stroke-width="0.9" stroke-dasharray="2 2.6"/>
<path d="M189 179.6H1431" stroke="#a0a8b2" stroke-width="0.9"/>
<rect x="201.33" y="574.50" width="1.5" height="5.70" fill="#3cd63c"/>
<rect x="213.60" y="575.60" width="1.5" height="4.60" fill="#3cd63c"/>
<rect x="225.88" y="573.60" width="1.5" height="6.60" fill="#3cd63c"/>
<rect x="238.15" y="568.50" width="1.5" height="11.70" fill="#3cd63c"/>
<rect x="250.43" y="564.50" width="1.5" height="15.70" fill="#3cd63c"/>
<rect x="262.70" y="563.70" width="1.5" height="16.50" fill="#3cd63c"/>
<rect x="274.98" y="569.40" width="1.5" height="10.80" fill="#3cd63c"/>
<rect x="287.25" y="569.90" width="1.5" height="10.30" fill="#3cd63c"/>
<rect x="299.53" y="567.10" width="1.5" height="13.10" fill="#3cd63c"/>
<rect x="311.80" y="562.80" width="1.5" height="17.40" fill="#3cd63c"/>
<rect x="324.08" y="549.40" width="1.5" height="30.80" fill="#3cd63c"/>
<rect x="336.35" y="542.30" width="1.5" height="37.90" fill="#3cd63c"/>
<rect x="348.62" y="557.40" width="1.5" height="22.80" fill="#3cd63c"/>
<rect x="360.90" y="567.40" width="1.5" height="12.80" fill="#3cd63c"/>
<rect x="373.18" y="562.20" width="1.5" height="18.00" fill="#3cd63c"/>
<rect x="385.45" y="564.50" width="1.5" height="15.70" fill="#3cd63c"/>
<rect x="397.73" y="566.50" width="1.5" height="13.70" fill="#3cd63c"/>
<rect x="410.00" y="576.50" width="1.5" height="3.70" fill="#3cd63c"/>
<rect x="422.27" y="577.90" width="1.5" height="2.30" fill="#3cd63c"/>
<rect x="434.55" y="575.10" width="1.5" height="5.10" fill="#3cd63c"/>
<rect x="446.83" y="573.10" width="1.5" height="7.10" fill="#3cd63c"/>
<rect x="459.10" y="564.50" width="1.5" height="15.70" fill="#3cd63c"/>
<rect x="471.38" y="564.50" width="1.5" height="15.70" fill="#3cd63c"/>
<rect x="483.65" y="569.90" width="1.5" height="10.30" fill="#3cd63c"/>
<rect x="495.93" y="572.20" width="1.5" height="8.00" fill="#3cd63c"/>
<rect x="508.20" y="567.40" width="1.5" height="12.80" fill="#3cd63c"/>
<rect x="520.48" y="567.40" width="1.5" height="12.80" fill="#3cd63c"/>
<rect x="532.75" y="560.20" width="1.5" height="20.00" fill="#3cd63c"/>
<rect x="545.03" y="554.50" width="1.5" height="25.70" fill="#3cd63c"/>
<rect x="557.30" y="560.20" width="1.5" height="20.00" fill="#3cd63c"/>
<rect x="569.58" y="567.10" width="1.5" height="13.10" fill="#3cd63c"/>
<rect x="581.85" y="565.10" width="1.5" height="15.10" fill="#3cd63c"/>
<rect x="594.12" y="563.10" width="1.5" height="17.10" fill="#3cd63c"/>
<rect x="606.40" y="556.50" width="1.5" height="23.70" fill="#3cd63c"/>
<rect x="618.67" y="537.40" width="1.5" height="42.80" fill="#3cd63c"/>
<rect x="630.95" y="528.60" width="1.5" height="51.60" fill="#3cd63c"/>
<rect x="643.23" y="546.60" width="1.5" height="33.60" fill="#3cd63c"/>
<rect x="655.50" y="557.40" width="1.5" height="22.80" fill="#3cd63c"/>
<rect x="667.78" y="558.00" width="1.5" height="22.20" fill="#3cd63c"/>
<rect x="680.05" y="556.50" width="1.5" height="23.70" fill="#3cd63c"/>
<rect x="692.33" y="562.20" width="1.5" height="18.00" fill="#3cd63c"/>
<rect x="704.60" y="574.50" width="1.5" height="5.70" fill="#3cd63c"/>
<rect x="716.88" y="577.90" width="1.5" height="2.30" fill="#3cd63c"/>
<rect x="729.15" y="574.20" width="1.5" height="6.00" fill="#3cd63c"/>
<rect x="741.42" y="572.20" width="1.5" height="8.00" fill="#3cd63c"/>
<rect x="753.70" y="569.90" width="1.5" height="10.30" fill="#3cd63c"/>
<rect x="765.98" y="566.50" width="1.5" height="13.70" fill="#3cd63c"/>
<rect x="778.25" y="570.80" width="1.5" height="9.40" fill="#3cd63c"/>
<rect x="790.53" y="573.10" width="1.5" height="7.10" fill="#3cd63c"/>
<rect x="802.80" y="573.60" width="1.5" height="6.60" fill="#3cd63c"/>
<rect x="815.08" y="572.20" width="1.5" height="8.00" fill="#3cd63c"/>
<rect x="827.35" y="565.90" width="1.5" height="14.30" fill="#3cd63c"/>
<rect x="839.62" y="562.20" width="1.5" height="18.00" fill="#3cd63c"/>
<rect x="851.90" y="565.10" width="1.5" height="15.10" fill="#3cd63c"/>
<rect x="864.17" y="570.20" width="1.5" height="10.00" fill="#3cd63c"/>
<rect x="876.45" y="567.40" width="1.5" height="12.80" fill="#3cd63c"/>
<rect x="888.73" y="565.90" width="1.5" height="14.30" fill="#3cd63c"/>
<rect x="901.00" y="560.80" width="1.5" height="19.40" fill="#3cd63c"/>
<rect x="913.28" y="555.70" width="1.5" height="24.50" fill="#3cd63c"/>
<rect x="925.55" y="537.40" width="1.5" height="42.80" fill="#3cd63c"/>
<rect x="937.83" y="553.10" width="1.5" height="27.10" fill="#3cd63c"/>
<rect x="950.10" y="560.80" width="1.5" height="19.40" fill="#3cd63c"/>
<rect x="962.38" y="567.40" width="1.5" height="12.80" fill="#3cd63c"/>
<rect x="974.65" y="564.50" width="1.5" height="15.70" fill="#3cd63c"/>
<rect x="986.92" y="568.50" width="1.5" height="11.70" fill="#3cd63c"/>
<rect x="999.20" y="575.10" width="1.5" height="5.10" fill="#3cd63c"/>
<rect x="1011.48" y="578.10" width="1.5" height="2.10" fill="#3cd63c"/>
<rect x="1023.75" y="575.10" width="1.5" height="5.10" fill="#3cd63c"/>
<rect x="1036.03" y="576.70" width="1.5" height="3.50" fill="#3cd63c"/>
<rect x="1048.30" y="573.50" width="1.5" height="6.70" fill="#3cd63c"/>
<rect x="1060.58" y="572.60" width="1.5" height="7.60" fill="#3cd63c"/>
<rect x="1072.85" y="574.20" width="1.5" height="6.00" fill="#3cd63c"/>
<rect x="1085.12" y="576.70" width="1.5" height="3.50" fill="#3cd63c"/>
<rect x="1097.40" y="577.70" width="1.5" height="2.50" fill="#3cd63c"/>
<rect x="1109.67" y="573.50" width="1.5" height="6.70" fill="#3cd63c"/>
<rect x="1121.95" y="566.20" width="1.5" height="14.00" fill="#3cd63c"/>
<rect x="1134.23" y="563.40" width="1.5" height="16.80" fill="#3cd63c"/>
<rect x="1146.50" y="567.80" width="1.5" height="12.40" fill="#3cd63c"/>
<rect x="1158.78" y="568.80" width="1.5" height="11.40" fill="#3cd63c"/>
<rect x="1171.05" y="568.80" width="1.5" height="11.40" fill="#3cd63c"/>
<rect x="1183.33" y="557.60" width="1.5" height="22.60" fill="#3cd63c"/>
<rect x="1195.60" y="558.60" width="1.5" height="21.60" fill="#3cd63c"/>
<rect x="1207.88" y="547.20" width="1.5" height="33.00" fill="#3cd63c"/>
<rect x="1220.15" y="545.60" width="1.5" height="34.60" fill="#3cd63c"/>
<rect x="1232.42" y="554.50" width="1.5" height="25.70" fill="#3cd63c"/>
<rect x="1244.70" y="560.80" width="1.5" height="19.40" fill="#3cd63c"/>
<rect x="1256.97" y="564.00" width="1.5" height="16.20" fill="#3cd63c"/>
<rect x="1269.25" y="566.20" width="1.5" height="14.00" fill="#3cd63c"/>
<rect x="1281.53" y="568.80" width="1.5" height="11.40" fill="#3cd63c"/>
<rect x="1293.80" y="575.10" width="1.5" height="5.10" fill="#3cd63c"/>
<rect x="1306.08" y="578.30" width="1.5" height="1.90" fill="#3cd63c"/>
<rect x="1318.35" y="575.10" width="1.5" height="5.10" fill="#3cd63c"/>
<rect x="1330.62" y="576.10" width="1.5" height="4.10" fill="#3cd63c"/>
<rect x="1342.90" y="570.40" width="1.5" height="9.80" fill="#3cd63c"/>
<rect x="1355.17" y="567.20" width="1.5" height="13.00" fill="#3cd63c"/>
<rect x="1367.45" y="570.40" width="1.5" height="9.80" fill="#3cd63c"/>
<rect x="1379.72" y="576.10" width="1.5" height="4.10" fill="#3cd63c"/>
<rect x="1392.00" y="575.10" width="1.5" height="5.10" fill="#3cd63c"/>
<rect x="1404.28" y="572.90" width="1.5" height="7.30" fill="#3cd63c"/>
<rect x="1416.55" y="570.40" width="1.5" height="9.80" fill="#3cd63c"/>
<path d="M189.80 376V378.3M189.80 427.6V430" stroke="#00e000" stroke-width="0.9"/>
<rect x="186.00" y="378.3" width="7.60" height="49.30" fill="#fff" stroke="#5cff5c" stroke-width="0.9"/>
<path d="M202.08 381.8V386.4M202.08 428V430.6" stroke="#00e000" stroke-width="0.9"/>
<rect x="198.28" y="386.4" width="7.60" height="41.60" fill="#000" stroke="#00d400" stroke-width="0.85"/>
<path d="M214.35 376.7V384.4M214.35 386.8V392" stroke="#00e000" stroke-width="0.9"/>
<rect x="210.55" y="384.4" width="7.60" height="2.40" fill="#000" stroke="#00d400" stroke-width="0.85"/>
<path d="M226.62 374.2V411.7" stroke="#00e000" stroke-width="0.9"/>
<path d="M222.43 384.4H230.82" stroke="#00e000" stroke-width="0.9"/>
<path d="M238.90 379.7V383.4M238.90 434.3V447" stroke="#00e000" stroke-width="0.9"/>
<rect x="235.10" y="383.4" width="7.60" height="50.90" fill="#fff" stroke="#5cff5c" stroke-width="0.9"/>
<path d="M251.18 426.6V434M251.18 468V475.4" stroke="#00e000" stroke-width="0.9"/>
<rect x="247.38" y="434" width="7.60" height="34.00" fill="#fff" stroke="#5cff5c" stroke-width="0.9"/>
<path d="M263.45 427.6V462.2M263.45 467.7V482.6" stroke="#00e000" stroke-width="0.9"/>
<rect x="259.65" y="462.2" width="7.60" height="5.50" fill="#000" stroke="#00d400" stroke-width="0.85"/>
<path d="M275.73 460.2V462.2M275.73 499.5V511.7" stroke="#00e000" stroke-width="0.9"/>
<rect x="271.93" y="462.2" width="7.60" height="37.30" fill="#fff" stroke="#5cff5c" stroke-width="0.9"/>
<path d="M288.00 487.3V499.5M288.00 507.8V525.5" stroke="#00e000" stroke-width="0.9"/>
<rect x="284.20" y="499.5" width="7.60" height="8.30" fill="#fff" stroke="#5cff5c" stroke-width="0.9"/>
<path d="M300.28 478.7V483.2M300.28 507.8V524.5" stroke="#00e000" stroke-width="0.9"/>
<rect x="296.48" y="483.2" width="7.60" height="24.60" fill="#000" stroke="#00d400" stroke-width="0.85"/>
<path d="M312.55 455.3V461.8M312.55 483.4V507.8" stroke="#00e000" stroke-width="0.9"/>
<rect x="308.75" y="461.8" width="7.60" height="21.60" fill="#000" stroke="#00d400" stroke-width="0.85"/>
<path d="M324.83 350.6V365.6M324.83 461.8V464.2" stroke="#00e000" stroke-width="0.9"/>
<rect x="321.03" y="365.6" width="7.60" height="96.20" fill="#000" stroke="#00d400" stroke-width="0.85"/>
<path d="M337.10 312.5V353.5M337.10 367.4V407.2" stroke="#00e000" stroke-width="0.9"/>
<rect x="333.30" y="353.5" width="7.60" height="13.90" fill="#000" stroke="#00d400" stroke-width="0.85"/>
<path d="M349.38 276.9V299.3M349.38 353.5V366.5" stroke="#00e000" stroke-width="0.9"/>
<rect x="345.57" y="299.3" width="7.60" height="54.20" fill="#000" stroke="#00d400" stroke-width="0.85"/>
<path d="M361.65 299.3V299.3M361.65 336.2V340.9" stroke="#00e000" stroke-width="0.9"/>
<rect x="357.85" y="299.3" width="7.60" height="36.90" fill="#fff" stroke="#5cff5c" stroke-width="0.9"/>
<path d="M373.93 250.3V265.6M373.93 331.8V331.8" stroke="#00e000" stroke-width="0.9"/>
<rect x="370.12" y="265.6" width="7.60" height="66.20" fill="#000" stroke="#00d400" stroke-width="0.85"/>
<path d="M386.20 250V257.2M386.20 265.8V270" stroke="#00e000" stroke-width="0.9"/>
<rect x="382.40" y="257.2" width="7.60" height="8.60" fill="#000" stroke="#00d400" stroke-width="0.85"/>
<path d="M545.78 141.1V207.7" stroke="#00e000" stroke-width="0.9"/>
<path d="M541.58 191.3H549.98" stroke="#00e000" stroke-width="0.9"/>
<path d="M558.05 145.8V190.1M558.05 203.3V212" stroke="#00e000" stroke-width="0.9"/>
<rect x="554.25" y="190.1" width="7.60" height="13.20" fill="#fff" stroke="#5cff5c" stroke-width="0.9"/>
<path d="M570.33 161.8V182.5M570.33 203.3V209.4" stroke="#00e000" stroke-width="0.9"/>
<rect x="566.52" y="182.5" width="7.60" height="20.80" fill="#000" stroke="#00d400" stroke-width="0.85"/>
<path d="M582.60 146.5V164.2M582.60 181.6V189" stroke="#00e000" stroke-width="0.9"/>
<rect x="578.80" y="164.2" width="7.60" height="17.40" fill="#000" stroke="#00d400" stroke-width="0.85"/>
<path d="M594.88 156.2V164.2M594.88 227.8V249.7" stroke="#00e000" stroke-width="0.9"/>
<rect x="591.07" y="164.2" width="7.60" height="63.60" fill="#fff" stroke="#5cff5c" stroke-width="0.9"/>
<path d="M607.15 179.9V197.2M607.15 229.1V240.8" stroke="#00e000" stroke-width="0.9"/>
<rect x="603.35" y="197.2" width="7.60" height="31.90" fill="#000" stroke="#00d400" stroke-width="0.85"/>
<path d="M619.42 131.2V178.6M619.42 197.2V278.8" stroke="#00e000" stroke-width="0.9"/>
<rect x="615.62" y="178.6" width="7.60" height="18.60" fill="#000" stroke="#00d400" stroke-width="0.85"/>
<path d="M631.70 109.5V178.8M631.70 187.5V231.8" stroke="#00e000" stroke-width="0.9"/>
<rect x="627.90" y="178.8" width="7.60" height="8.70" fill="#fff" stroke="#5cff5c" stroke-width="0.9"/>
<path d="M643.98 165.5V188M643.98 220.1V263.5" stroke="#00e000" stroke-width="0.9"/>
<rect x="640.17" y="188" width="7.60" height="32.10" fill="#fff" stroke="#5cff5c" stroke-width="0.9"/>
<path d="M656.25 210.4V220.1M656.25 287.3V290" stroke="#00e000" stroke-width="0.9"/>
<rect x="652.45" y="220.1" width="7.60" height="67.20" fill="#fff" stroke="#5cff5c" stroke-width="0.9"/>
<path d="M668.53 201.3V243.1M668.53 286.9V293" stroke="#00e000" stroke-width="0.9"/>
<rect x="664.73" y="243.1" width="7.60" height="43.80" fill="#000" stroke="#00d400" stroke-width="0.85"/>
<path d="M680.80 200.6V210.5M680.80 243.1V263.5" stroke="#00e000" stroke-width="0.9"/>
<rect x="677.00" y="210.5" width="7.60" height="32.60" fill="#000" stroke="#00d400" stroke-width="0.85"/>
<path d="M693.08 161V166.6M693.08 210.4V224" stroke="#00e000" stroke-width="0.9"/>
<rect x="689.27" y="166.6" width="7.60" height="43.80" fill="#000" stroke="#00d400" stroke-width="0.85"/>
<path d="M705.35 128.3V138M705.35 166.6V167.6" stroke="#00e000" stroke-width="0.9"/>
<rect x="701.55" y="138" width="7.60" height="28.60" fill="#000" stroke="#00d400" stroke-width="0.85"/>
<path d="M717.62 134V146.2M717.62 154.3V177.8" stroke="#00e000" stroke-width="0.9"/>
<rect x="713.82" y="146.2" width="7.60" height="8.10" fill="#000" stroke="#00d400" stroke-width="0.85"/>
<path d="M729.90 128.9V133.4M729.90 159.4V166.6" stroke="#00e000" stroke-width="0.9"/>
<rect x="726.10" y="133.4" width="7.60" height="26.00" fill="#000" stroke="#00d400" stroke-width="0.85"/>
<path d="M742.17 102.8V107.5M742.17 133.4V151.3" stroke="#00e000" stroke-width="0.9"/>
<rect x="738.37" y="107.5" width="7.60" height="25.90" fill="#000" stroke="#00d400" stroke-width="0.85"/>
<path d="M754.45 90.2V107.5M754.45 117.3V119.7" stroke="#00e000" stroke-width="0.9"/>
<rect x="750.65" y="107.5" width="7.60" height="9.80" fill="#fff" stroke="#5cff5c" stroke-width="0.9"/>
<path d="M766.73 117.3V117.3M766.73 208.2V213" stroke="#00e000" stroke-width="0.9"/>
<rect x="762.93" y="117.3" width="7.60" height="90.90" fill="#fff" stroke="#5cff5c" stroke-width="0.9"/>
<path d="M779.00 174.7V193M779.00 208.4V223.5" stroke="#00e000" stroke-width="0.9"/>
<rect x="775.20" y="193" width="7.60" height="15.40" fill="#000" stroke="#00d400" stroke-width="0.85"/>
<path d="M791.28 188V193M791.28 212.3V214.4" stroke="#00e000" stroke-width="0.9"/>
<rect x="787.48" y="193" width="7.60" height="19.30" fill="#fff" stroke="#5cff5c" stroke-width="0.9"/>
<path d="M803.55 201.3V211.1M803.55 213.3V222.5" stroke="#00e000" stroke-width="0.9"/>
<rect x="799.75" y="211.1" width="7.60" height="2.20" fill="#fff" stroke="#5cff5c" stroke-width="0.9"/>
<path d="M815.83 208.4V213.3M815.83 225.4V237.7" stroke="#00e000" stroke-width="0.9"/>
<rect x="812.02" y="213.3" width="7.60" height="12.10" fill="#fff" stroke="#5cff5c" stroke-width="0.9"/>
<path d="M828.10 179.2V191.4M828.10 225.4V235.7" stroke="#00e000" stroke-width="0.9"/>
<rect x="824.30" y="191.4" width="7.60" height="34.00" fill="#000" stroke="#00d400" stroke-width="0.85"/>
<path d="M840.38 168.2V183.5M840.38 192V211.3" stroke="#00e000" stroke-width="0.9"/>
<rect x="836.57" y="183.5" width="7.60" height="8.50" fill="#000" stroke="#00d400" stroke-width="0.85"/>
<path d="M852.65 160.4V183.5M852.65 206.8V216.6" stroke="#00e000" stroke-width="0.9"/>
<rect x="848.85" y="183.5" width="7.60" height="23.30" fill="#fff" stroke="#5cff5c" stroke-width="0.9"/>
<path d="M864.92 191V207M864.92 222.3V227.3" stroke="#00e000" stroke-width="0.9"/>
<rect x="861.12" y="207" width="7.60" height="15.30" fill="#fff" stroke="#5cff5c" stroke-width="0.9"/>
<path d="M877.20 186.9V200.2M877.20 223.3V249.5" stroke="#00e000" stroke-width="0.9"/>
<rect x="873.40" y="200.2" width="7.60" height="23.10" fill="#000" stroke="#00d400" stroke-width="0.85"/>
<path d="M889.48 198V200.4M889.48 246.2V257" stroke="#00e000" stroke-width="0.9"/>
<rect x="885.68" y="200.4" width="7.60" height="45.80" fill="#fff" stroke="#5cff5c" stroke-width="0.9"/>
<path d="M901.75 243.8V246.2M901.75 283.5V299.8" stroke="#00e000" stroke-width="0.9"/>
<rect x="897.95" y="246.2" width="7.60" height="37.30" fill="#fff" stroke="#5cff5c" stroke-width="0.9"/>
<path d="M914.03 224.3V256.6M914.03 283.5V291.2" stroke="#00e000" stroke-width="0.9"/>
<rect x="910.23" y="256.6" width="7.60" height="26.90" fill="#000" stroke="#00d400" stroke-width="0.85"/>
<path d="M926.30 119.7V120.7M926.30 257V258.5" stroke="#00e000" stroke-width="0.9"/>
<rect x="922.50" y="120.7" width="7.60" height="136.30" fill="none" stroke="#00a800" stroke-width="0.85"/>
<path d="M938.58 117.3V120.7M938.58 171V184.9" stroke="#00e000" stroke-width="0.9"/>
<rect x="934.77" y="120.7" width="7.60" height="50.30" fill="#fff" stroke="#5cff5c" stroke-width="0.9"/>
<path d="M950.85 151.3V171M950.85 218.6V226.2" stroke="#00e000" stroke-width="0.9"/>
<rect x="947.05" y="171" width="7.60" height="47.60" fill="#fff" stroke="#5cff5c" stroke-width="0.9"/>
<path d="M963.12 210V218.6M963.12 246.2V259.7" stroke="#00e000" stroke-width="0.9"/>
<rect x="959.32" y="218.6" width="7.60" height="27.60" fill="#fff" stroke="#5cff5c" stroke-width="0.9"/>
<path d="M975.40 243.4V246.2M975.40 263.7V288" stroke="#00e000" stroke-width="0.9"/>
<rect x="971.60" y="246.2" width="7.60" height="17.50" fill="#fff" stroke="#5cff5c" stroke-width="0.9"/>
<path d="M987.67 260.1V291.6" stroke="#00e000" stroke-width="0.9"/>
<path d="M983.47 264.6H991.88" stroke="#00e000" stroke-width="0.9"/>
<path d="M999.95 257V264.2M999.95 270.9V290.2" stroke="#00e000" stroke-width="0.9"/>
<rect x="996.15" y="264.2" width="7.60" height="6.70" fill="#fff" stroke="#5cff5c" stroke-width="0.9"/>
<path d="M1012.23 257V259.1M1012.23 279.4V279.4" stroke="#00e000" stroke-width="0.9"/>
<rect x="1008.43" y="259.1" width="7.60" height="20.30" fill="#000" stroke="#00d400" stroke-width="0.85"/>
<path d="M1024.50 238.7V241.3M1024.50 260.5V266.2" stroke="#00e000" stroke-width="0.9"/>
<rect x="1020.70" y="241.3" width="7.60" height="19.20" fill="#000" stroke="#00d400" stroke-width="0.85"/>
<path d="M1036.78 220.4V220.4M1036.78 241.8V242.8" stroke="#00e000" stroke-width="0.9"/>
<rect x="1032.98" y="220.4" width="7.60" height="21.40" fill="#000" stroke="#00d400" stroke-width="0.85"/>
<path d="M1049.05 218V220.4M1049.05 268.6V273.3" stroke="#00e000" stroke-width="0.9"/>
<rect x="1045.25" y="220.4" width="7.60" height="48.20" fill="#fff" stroke="#5cff5c" stroke-width="0.9"/>
<path d="M1061.33 254.6V264.2M1061.33 269.7V294.7" stroke="#00e000" stroke-width="0.9"/>
<rect x="1057.53" y="264.2" width="7.60" height="5.50" fill="#000" stroke="#00d400" stroke-width="0.85"/>
<path d="M1073.60 234.2V255.4M1073.60 264.8V279" stroke="#00e000" stroke-width="0.9"/>
<rect x="1069.80" y="255.4" width="7.60" height="9.40" fill="#000" stroke="#00d400" stroke-width="0.85"/>
<path d="M1085.88 238.3V253.6M1085.88 256.4V264.8" stroke="#00e000" stroke-width="0.9"/>
<rect x="1082.08" y="253.6" width="7.60" height="2.80" fill="#000" stroke="#00d400" stroke-width="0.85"/>
<path d="M1098.15 252.5V254M1098.15 265.2V267.2" stroke="#00e000" stroke-width="0.9"/>
<rect x="1094.35" y="254" width="7.60" height="11.20" fill="#fff" stroke="#5cff5c" stroke-width="0.9"/>
<path d="M1110.42 246.4V249.5M1110.42 265.6V283.9" stroke="#00e000" stroke-width="0.9"/>
<rect x="1106.62" y="249.5" width="7.60" height="16.10" fill="#000" stroke="#00d400" stroke-width="0.85"/>
<path d="M1122.70 220V262" stroke="#00e000" stroke-width="0.9"/>
<path d="M1118.50 246H1126.90" stroke="#00e000" stroke-width="0.9"/>
<path d="M1134.98 226V242.4M1134.98 256V273.3" stroke="#00e000" stroke-width="0.9"/>
<rect x="1131.18" y="242.4" width="7.60" height="13.60" fill="#fff" stroke="#5cff5c" stroke-width="0.9"/>
<path d="M1147.25 220.4V241.3M1147.25 256.4V272.3" stroke="#00e000" stroke-width="0.9"/>
<rect x="1143.45" y="241.3" width="7.60" height="15.10" fill="#000" stroke="#00d400" stroke-width="0.85"/>
<path d="M1159.53 229.1V241.3M1159.53 292.7V305.9" stroke="#00e000" stroke-width="0.9"/>
<rect x="1155.73" y="241.3" width="7.60" height="51.40" fill="#fff" stroke="#5cff5c" stroke-width="0.9"/>
<path d="M1171.80 292.3V292.3M1171.80 331.4V350.7" stroke="#00e000" stroke-width="0.9"/>
<rect x="1168.00" y="292.3" width="7.60" height="39.10" fill="#fff" stroke="#5cff5c" stroke-width="0.9"/>
<path d="M1184.08 251.3V263.7M1184.08 331.4V339.1" stroke="#00e000" stroke-width="0.9"/>
<rect x="1180.28" y="263.7" width="7.60" height="67.70" fill="#000" stroke="#00d400" stroke-width="0.85"/>
<path d="M1196.35 251.3V264.2M1196.35 280.4V309.6" stroke="#00e000" stroke-width="0.9"/>
<rect x="1192.55" y="264.2" width="7.60" height="16.20" fill="#fff" stroke="#5cff5c" stroke-width="0.9"/>
<path d="M1208.62 147.9V207M1208.62 280V280" stroke="#00e000" stroke-width="0.9"/>
<rect x="1204.83" y="207" width="7.60" height="73.00" fill="#000" stroke="#00d400" stroke-width="0.85"/>
<path d="M1220.90 179.4V207M1220.90 217V254.6" stroke="#00e000" stroke-width="0.9"/>
<rect x="1217.10" y="207" width="7.60" height="10.00" fill="#fff" stroke="#5cff5c" stroke-width="0.9"/>
<path d="M1233.17 178.4V217.2M1233.17 227.7V240.3" stroke="#00e000" stroke-width="0.9"/>
<rect x="1229.38" y="217.2" width="7.60" height="10.50" fill="#fff" stroke="#5cff5c" stroke-width="0.9"/>
<path d="M1245.45 163.1V170.3M1245.45 227.5V245.4" stroke="#00e000" stroke-width="0.9"/>
<rect x="1241.65" y="170.3" width="7.60" height="57.20" fill="#000" stroke="#00d400" stroke-width="0.85"/>
<path d="M1257.72 160.1V170.3M1257.72 217V239.9" stroke="#00e000" stroke-width="0.9"/>
<rect x="1253.92" y="170.3" width="7.60" height="46.70" fill="#fff" stroke="#5cff5c" stroke-width="0.9"/>
<path d="M1270.00 215.2V217M1270.00 245.4V263.1" stroke="#00e000" stroke-width="0.9"/>
<rect x="1266.20" y="217" width="7.60" height="28.40" fill="#fff" stroke="#5cff5c" stroke-width="0.9"/>
<path d="M1282.28 205.2V207.4M1282.28 245.4V255.6" stroke="#00e000" stroke-width="0.9"/>
<rect x="1278.48" y="207.4" width="7.60" height="38.00" fill="#000" stroke="#00d400" stroke-width="0.85"/>
<path d="M1294.55 171.6V191.6M1294.55 207.8V217" stroke="#00e000" stroke-width="0.9"/>
<rect x="1290.75" y="191.6" width="7.60" height="16.20" fill="#000" stroke="#00d400" stroke-width="0.85"/>
<path d="M1306.83 175.4V180.4M1306.83 201.5V205" stroke="#00e000" stroke-width="0.9"/>
<rect x="1303.03" y="180.4" width="7.60" height="21.10" fill="#000" stroke="#00d400" stroke-width="0.85"/>
<path d="M1319.10 168V180.4M1319.10 189.2V193.7" stroke="#00e000" stroke-width="0.9"/>
<rect x="1315.30" y="180.4" width="7.60" height="8.80" fill="#fff" stroke="#5cff5c" stroke-width="0.9"/>
<path d="M1331.38 162.2V169.3M1331.38 189.8V189.8" stroke="#00e000" stroke-width="0.9"/>
<rect x="1327.58" y="169.3" width="7.60" height="20.50" fill="#000" stroke="#00d400" stroke-width="0.85"/>
<path d="M1343.65 155.2V163.4M1343.65 170.5V179.5" stroke="#00e000" stroke-width="0.9"/>
<rect x="1339.85" y="163.4" width="7.60" height="7.10" fill="#000" stroke="#00d400" stroke-width="0.85"/>
<path d="M1355.92 137.8V151.6M1355.92 163.5V170" stroke="#00e000" stroke-width="0.9"/>
<rect x="1352.12" y="151.6" width="7.60" height="11.90" fill="#000" stroke="#00d400" stroke-width="0.85"/>
<path d="M1368.20 141.7V152.5M1368.20 155.8V163.8" stroke="#00e000" stroke-width="0.9"/>
<rect x="1364.40" y="152.5" width="7.60" height="3.30" fill="#fff" stroke="#5cff5c" stroke-width="0.9"/>
<path d="M1380.47 154.1V156.5M1380.47 169.6V171.1" stroke="#00e000" stroke-width="0.9"/>
<rect x="1376.67" y="156.5" width="7.60" height="13.10" fill="#fff" stroke="#5cff5c" stroke-width="0.9"/>
<path d="M1392.75 163.1V169.6M1392.75 174.8V179.6" stroke="#00e000" stroke-width="0.9"/>
<rect x="1388.95" y="169.6" width="7.60" height="5.20" fill="#fff" stroke="#5cff5c" stroke-width="0.9"/>
<path d="M1405.03 146.3V174.8M1405.03 179.3V185.8" stroke="#00e000" stroke-width="0.9"/>
<rect x="1401.23" y="174.8" width="7.60" height="4.50" fill="#fff" stroke="#5cff5c" stroke-width="0.9"/>
<path d="M1417.30 152V184.9" stroke="#00e000" stroke-width="0.9"/>
<path d="M1413.10 179.3H1421.50" stroke="#00e000" stroke-width="0.9"/>
<path d="M300.4 507.9H754.5" stroke="#c8c83c" stroke-width="1.1"/>
<path d="M300.4 409.5H754.5" stroke="#c8c83c" stroke-width="1.1"/>
<path d="M300.4 348.5H754.5" stroke="#c8c83c" stroke-width="1.1"/>
<path d="M300.4 299.4H754.5" stroke="#c8c83c" stroke-width="1.1"/>
<path d="M300.4 250.3H754.5" stroke="#c8c83c" stroke-width="1.1"/>
<path d="M300.4 90.4H754.5" stroke="#c8c83c" stroke-width="1.1"/>
<path d="M300.4 507.9L754.5 90.4" stroke="#e02020" stroke-width="0.9"/>
<path d="M926.30 153V213M926.30 153L937.60 125" stroke="#2a5a9a" stroke-width="0.7" stroke-dasharray="1.5 1.5"/>
<path d="M926.3 150.20000000000002L929.4 153.3L926.3 156.4L923.1999999999999 153.3Z" fill="#2f7fd6" stroke="#fff" stroke-width="0.6"/>
<path d="M926.3 158.4L929.4 161.5L926.3 164.6L923.1999999999999 161.5Z" fill="#2f7fd6" stroke="#fff" stroke-width="0.6"/>
<path d="M926.3 163.5L929.4 166.6L926.3 169.7L923.1999999999999 166.6Z" fill="#2f7fd6" stroke="#fff" stroke-width="0.6"/>
<path d="M926.3 174.3L929.4 177.4L926.3 180.5L923.1999999999999 177.4Z" fill="#2f7fd6" stroke="#fff" stroke-width="0.6"/>
<path d="M926.3 198.1L929.4 201.2L926.3 204.29999999999998L923.1999999999999 201.2Z" fill="#2f7fd6" stroke="#fff" stroke-width="0.6"/>
<path d="M926.3 209.3L929.4 212.4L926.3 215.5L923.1999999999999 212.4Z" fill="#2f7fd6" stroke="#fff" stroke-width="0.6"/>
<path d="M938.58 119.3L941.08 121.8L938.58 124.3L936.08 121.8Z" fill="#e03a1e" stroke="#fff" stroke-width="0.6"/>
<path d="M938.58 124.3L941.08 126.8L938.58 129.3L936.08 126.8Z" fill="#e03a1e" stroke="#fff" stroke-width="0.6"/>
<ellipse cx="1122.70" cy="245.8" rx="3.6" ry="6" fill="#fff"/>
<path d="M1122.7 240.5L1125.0 242.8L1122.7 245.10000000000002L1120.4 242.8Z" fill="#e03a1e" stroke="#fff" stroke-width="0.6"/>
<path d="M1122.7 246.6L1125.0 248.9L1122.7 251.20000000000002L1120.4 248.9Z" fill="#1f6fd0" stroke="#fff" stroke-width="0.6"/>
<rect x="299" y="506.6" width="2.8" height="2.8" fill="#fff" stroke="#e03030" stroke-width="0.8"/>
<rect x="753.1" y="88.9" width="2.8" height="2.8" fill="#fff" stroke="#e03030" stroke-width="0.8"/>
</g>
<text x="753.5" y="506.1" font-size="7.4" fill="#dcdc3c" text-anchor="end" font-family='"Liberation Sans",sans-serif'>0.0</text>
<text x="753.5" y="407.7" font-size="7.4" fill="#dcdc3c" text-anchor="end" font-family='"Liberation Sans",sans-serif'>23.6</text>
<text x="753.5" y="346.7" font-size="7.4" fill="#dcdc3c" text-anchor="end" font-family='"Liberation Sans",sans-serif'>38.2</text>
<text x="753.5" y="297.6" font-size="7.4" fill="#dcdc3c" text-anchor="end" font-family='"Liberation Sans",sans-serif'>50.0</text>
<text x="753.5" y="248.5" font-size="7.4" fill="#dcdc3c" text-anchor="end" font-family='"Liberation Sans",sans-serif'>61.8</text>
<text x="753.5" y="88.6" font-size="7.4" fill="#dcdc3c" text-anchor="end" font-family='"Liberation Sans",sans-serif'>100.0</text>
<path d="M189.4 82V581.3" stroke="#d0d0d0" stroke-width="1.3"/>
<path d="M188.8 580.8H1431.6" stroke="#d0d0d0" stroke-width="1.5"/>
<path d="M1431 82V581.3" stroke="#d0d0d0" stroke-width="1.3"/>
<path d="M189.4 82.2H1431.6" stroke="#b4b4b4" stroke-width="1.1"/>
<path d="M1431 95.70h3.8" stroke="#d0d0d0" stroke-width="1"/>
<text x="1435.9" y="98.50" font-size="7.7" fill="#f4f4f4" textLength="24.8" lengthAdjust="spacingAndGlyphs" font-family='"Liberation Sans",sans-serif'>1.28910</text>
<path d="M1431 119.96h3.8" stroke="#d0d0d0" stroke-width="1"/>
<text x="1435.9" y="122.76" font-size="7.7" fill="#f4f4f4" textLength="24.8" lengthAdjust="spacingAndGlyphs" font-family='"Liberation Sans",sans-serif'>1.28840</text>
<path d="M1431 144.22h3.8" stroke="#d0d0d0" stroke-width="1"/>
<text x="1435.9" y="147.02" font-size="7.7" fill="#f4f4f4" textLength="24.8" lengthAdjust="spacingAndGlyphs" font-family='"Liberation Sans",sans-serif'>1.28770</text>
<path d="M1431 168.48h3.8" stroke="#d0d0d0" stroke-width="1"/>
<text x="1435.9" y="171.28" font-size="7.7" fill="#f4f4f4" textLength="24.8" lengthAdjust="spacingAndGlyphs" font-family='"Liberation Sans",sans-serif'>1.28700</text>
<path d="M1431 192.74h3.8" stroke="#d0d0d0" stroke-width="1"/>
<text x="1435.9" y="195.54" font-size="7.7" fill="#f4f4f4" textLength="24.8" lengthAdjust="spacingAndGlyphs" font-family='"Liberation Sans",sans-serif'>1.28630</text>
<path d="M1431 217.00h3.8" stroke="#d0d0d0" stroke-width="1"/>
<text x="1435.9" y="219.80" font-size="7.7" fill="#f4f4f4" textLength="24.8" lengthAdjust="spacingAndGlyphs" font-family='"Liberation Sans",sans-serif'>1.28560</text>
<path d="M1431 241.26h3.8" stroke="#d0d0d0" stroke-width="1"/>
<text x="1435.9" y="244.06" font-size="7.7" fill="#f4f4f4" textLength="24.8" lengthAdjust="spacingAndGlyphs" font-family='"Liberation Sans",sans-serif'>1.28490</text>
<path d="M1431 265.52h3.8" stroke="#d0d0d0" stroke-width="1"/>
<text x="1435.9" y="268.32" font-size="7.7" fill="#f4f4f4" textLength="24.8" lengthAdjust="spacingAndGlyphs" font-family='"Liberation Sans",sans-serif'>1.28420</text>
<path d="M1431 289.78h3.8" stroke="#d0d0d0" stroke-width="1"/>
<text x="1435.9" y="292.58" font-size="7.7" fill="#f4f4f4" textLength="24.8" lengthAdjust="spacingAndGlyphs" font-family='"Liberation Sans",sans-serif'>1.28350</text>
<path d="M1431 314.04h3.8" stroke="#d0d0d0" stroke-width="1"/>
<text x="1435.9" y="316.84" font-size="7.7" fill="#f4f4f4" textLength="24.8" lengthAdjust="spacingAndGlyphs" font-family='"Liberation Sans",sans-serif'>1.28280</text>
<path d="M1431 338.30h3.8" stroke="#d0d0d0" stroke-width="1"/>
<text x="1435.9" y="341.10" font-size="7.7" fill="#f4f4f4" textLength="24.8" lengthAdjust="spacingAndGlyphs" font-family='"Liberation Sans",sans-serif'>1.28210</text>
<path d="M1431 362.56h3.8" stroke="#d0d0d0" stroke-width="1"/>
<text x="1435.9" y="365.36" font-size="7.7" fill="#f4f4f4" textLength="24.8" lengthAdjust="spacingAndGlyphs" font-family='"Liberation Sans",sans-serif'>1.28140</text>
<path d="M1431 386.82h3.8" stroke="#d0d0d0" stroke-width="1"/>
<text x="1435.9" y="389.62" font-size="7.7" fill="#f4f4f4" textLength="24.8" lengthAdjust="spacingAndGlyphs" font-family='"Liberation Sans",sans-serif'>1.28070</text>
<path d="M1431 411.08h3.8" stroke="#d0d0d0" stroke-width="1"/>
<text x="1435.9" y="413.88" font-size="7.7" fill="#f4f4f4" textLength="24.8" lengthAdjust="spacingAndGlyphs" font-family='"Liberation Sans",sans-serif'>1.28000</text>
<path d="M1431 435.34h3.8" stroke="#d0d0d0" stroke-width="1"/>
<text x="1435.9" y="438.14" font-size="7.7" fill="#f4f4f4" textLength="24.8" lengthAdjust="spacingAndGlyphs" font-family='"Liberation Sans",sans-serif'>1.27930</text>
<path d="M1431 459.60h3.8" stroke="#d0d0d0" stroke-width="1"/>
<text x="1435.9" y="462.40" font-size="7.7" fill="#f4f4f4" textLength="24.8" lengthAdjust="spacingAndGlyphs" font-family='"Liberation Sans",sans-serif'>1.27860</text>
<path d="M1431 483.86h3.8" stroke="#d0d0d0" stroke-width="1"/>
<text x="1435.9" y="486.66" font-size="7.7" fill="#f4f4f4" textLength="24.8" lengthAdjust="spacingAndGlyphs" font-family='"Liberation Sans",sans-serif'>1.27790</text>
<path d="M1431 508.12h3.8" stroke="#d0d0d0" stroke-width="1"/>
<text x="1435.9" y="510.92" font-size="7.7" fill="#f4f4f4" textLength="24.8" lengthAdjust="spacingAndGlyphs" font-family='"Liberation Sans",sans-serif'>1.27720</text>
<path d="M1431 532.38h3.8" stroke="#d0d0d0" stroke-width="1"/>
<text x="1435.9" y="535.18" font-size="7.7" fill="#f4f4f4" textLength="24.8" lengthAdjust="spacingAndGlyphs" font-family='"Liberation Sans",sans-serif'>1.27650</text>
<path d="M1431 556.64h3.8" stroke="#d0d0d0" stroke-width="1"/>
<text x="1435.9" y="559.44" font-size="7.7" fill="#f4f4f4" textLength="24.8" lengthAdjust="spacingAndGlyphs" font-family='"Liberation Sans",sans-serif'>1.27580</text>
<rect x="1433.6" y="175.3" width="29.6" height="8.8" fill="#9aa8b8"/>
<text x="1435.9" y="182.5" font-size="7.7" fill="#1a2030" textLength="24.8" lengthAdjust="spacingAndGlyphs" font-family='"Liberation Sans",sans-serif'>1.28669</text>
<path d="M189.80 581v3" stroke="#d0d0d0" stroke-width="0.9"/>
<text x="189.20" y="591.2" font-size="7.7" fill="#f4f4f4" textLength="36.3" lengthAdjust="spacingAndGlyphs" font-family='"Liberation Sans",sans-serif'>1 Aug 2022</text>
<path d="M238.90 581v3" stroke="#d0d0d0" stroke-width="0.9"/>
<text x="238.30" y="591.2" font-size="7.7" fill="#f4f4f4" textLength="38.5" lengthAdjust="spacingAndGlyphs" font-family='"Liberation Sans",sans-serif'>1 Aug 09:00</text>
<path d="M288.00 581v3" stroke="#d0d0d0" stroke-width="0.9"/>
<text x="287.40" y="591.2" font-size="7.7" fill="#f4f4f4" textLength="38.5" lengthAdjust="spacingAndGlyphs" font-family='"Liberation Sans",sans-serif'>1 Aug 13:00</text>
<path d="M337.10 581v3" stroke="#d0d0d0" stroke-width="0.9"/>
<text x="336.50" y="591.2" font-size="7.7" fill="#f4f4f4" textLength="38.5" lengthAdjust="spacingAndGlyphs" font-family='"Liberation Sans",sans-serif'>1 Aug 17:00</text>
<path d="M386.20 581v3" stroke="#d0d0d0" stroke-width="0.9"/>
<text x="385.60" y="591.2" font-size="7.7" fill="#f4f4f4" textLength="38.5" lengthAdjust="spacingAndGlyphs" font-family='"Liberation Sans",sans-serif'>1 Aug 21:00</text>
<path d="M435.30 581v3" stroke="#d0d0d0" stroke-width="0.9"/>
<text x="434.70" y="591.2" font-size="7.7" fill="#f4f4f4" textLength="38.5" lengthAdjust="spacingAndGlyphs" font-family='"Liberation Sans",sans-serif'>2 Aug 01:00</text>
<path d="M484.40 581v3" stroke="#d0d0d0" stroke-width="0.9"/>
<text x="483.80" y="591.2" font-size="7.7" fill="#f4f4f4" textLength="38.5" lengthAdjust="spacingAndGlyphs" font-family='"Liberation Sans",sans-serif'>2 Aug 05:00</text>
<path d="M533.50 581v3" stroke="#d0d0d0" stroke-width="0.9"/>
<text x="532.90" y="591.2" font-size="7.7" fill="#f4f4f4" textLength="38.5" lengthAdjust="spacingAndGlyphs" font-family='"Liberation Sans",sans-serif'>2 Aug 09:00</text>
<path d="M582.60 581v3" stroke="#d0d0d0" stroke-width="0.9"/>
<text x="582.00" y="591.2" font-size="7.7" fill="#f4f4f4" textLength="38.5" lengthAdjust="spacingAndGlyphs" font-family='"Liberation Sans",sans-serif'>2 Aug 13:00</text>
<path d="M631.70 581v3" stroke="#d0d0d0" stroke-width="0.9"/>
<text x="631.10" y="591.2" font-size="7.7" fill="#f4f4f4" textLength="38.5" lengthAdjust="spacingAndGlyphs" font-family='"Liberation Sans",sans-serif'>2 Aug 17:00</text>
<path d="M680.80 581v3" stroke="#d0d0d0" stroke-width="0.9"/>
<text x="680.20" y="591.2" font-size="7.7" fill="#f4f4f4" textLength="38.5" lengthAdjust="spacingAndGlyphs" font-family='"Liberation Sans",sans-serif'>2 Aug 21:00</text>
<path d="M729.90 581v3" stroke="#d0d0d0" stroke-width="0.9"/>
<text x="729.30" y="591.2" font-size="7.7" fill="#f4f4f4" textLength="38.5" lengthAdjust="spacingAndGlyphs" font-family='"Liberation Sans",sans-serif'>3 Aug 01:00</text>
<path d="M779.00 581v3" stroke="#d0d0d0" stroke-width="0.9"/>
<text x="778.40" y="591.2" font-size="7.7" fill="#f4f4f4" textLength="38.5" lengthAdjust="spacingAndGlyphs" font-family='"Liberation Sans",sans-serif'>3 Aug 05:00</text>
<path d="M828.10 581v3" stroke="#d0d0d0" stroke-width="0.9"/>
<text x="827.50" y="591.2" font-size="7.7" fill="#f4f4f4" textLength="38.5" lengthAdjust="spacingAndGlyphs" font-family='"Liberation Sans",sans-serif'>3 Aug 09:00</text>
<path d="M877.20 581v3" stroke="#d0d0d0" stroke-width="0.9"/>
<text x="876.60" y="591.2" font-size="7.7" fill="#f4f4f4" textLength="38.5" lengthAdjust="spacingAndGlyphs" font-family='"Liberation Sans",sans-serif'>3 Aug 13:00</text>
<path d="M926.30 581v3" stroke="#d0d0d0" stroke-width="0.9"/>
<text x="925.70" y="591.2" font-size="7.7" fill="#f4f4f4" textLength="38.5" lengthAdjust="spacingAndGlyphs" font-family='"Liberation Sans",sans-serif'>3 Aug 17:00</text>
<path d="M975.40 581v3" stroke="#d0d0d0" stroke-width="0.9"/>
<text x="974.80" y="591.2" font-size="7.7" fill="#f4f4f4" textLength="38.5" lengthAdjust="spacingAndGlyphs" font-family='"Liberation Sans",sans-serif'>3 Aug 21:00</text>
<path d="M1024.50 581v3" stroke="#d0d0d0" stroke-width="0.9"/>
<text x="1023.90" y="591.2" font-size="7.7" fill="#f4f4f4" textLength="38.5" lengthAdjust="spacingAndGlyphs" font-family='"Liberation Sans",sans-serif'>4 Aug 01:00</text>
<path d="M1073.60 581v3" stroke="#d0d0d0" stroke-width="0.9"/>
<text x="1073.00" y="591.2" font-size="7.7" fill="#f4f4f4" textLength="38.5" lengthAdjust="spacingAndGlyphs" font-family='"Liberation Sans",sans-serif'>4 Aug 05:00</text>
<path d="M1122.70 581v3" stroke="#d0d0d0" stroke-width="0.9"/>
<text x="1122.10" y="591.2" font-size="7.7" fill="#f4f4f4" textLength="38.5" lengthAdjust="spacingAndGlyphs" font-family='"Liberation Sans",sans-serif'>4 Aug 09:00</text>
<path d="M1171.80 581v3" stroke="#d0d0d0" stroke-width="0.9"/>
<text x="1171.20" y="591.2" font-size="7.7" fill="#f4f4f4" textLength="38.5" lengthAdjust="spacingAndGlyphs" font-family='"Liberation Sans",sans-serif'>4 Aug 13:00</text>
<path d="M1220.90 581v3" stroke="#d0d0d0" stroke-width="0.9"/>
<text x="1220.30" y="591.2" font-size="7.7" fill="#f4f4f4" textLength="38.5" lengthAdjust="spacingAndGlyphs" font-family='"Liberation Sans",sans-serif'>4 Aug 17:00</text>
<path d="M1270.00 581v3" stroke="#d0d0d0" stroke-width="0.9"/>
<text x="1269.40" y="591.2" font-size="7.7" fill="#f4f4f4" textLength="38.5" lengthAdjust="spacingAndGlyphs" font-family='"Liberation Sans",sans-serif'>4 Aug 21:00</text>
<path d="M1319.10 581v3" stroke="#d0d0d0" stroke-width="0.9"/>
<text x="1318.50" y="591.2" font-size="7.7" fill="#f4f4f4" textLength="38.5" lengthAdjust="spacingAndGlyphs" font-family='"Liberation Sans",sans-serif'>5 Aug 01:00</text>
<path d="M1368.20 581v3" stroke="#d0d0d0" stroke-width="0.9"/>
<text x="1367.60" y="591.2" font-size="7.7" fill="#f4f4f4" textLength="38.5" lengthAdjust="spacingAndGlyphs" font-family='"Liberation Sans",sans-serif'>5 Aug 05:00</text>
<path d="M1417.30 581v3" stroke="#d0d0d0" stroke-width="0.9"/>
<text x="1416.70" y="591.2" font-size="7.7" fill="#f4f4f4" textLength="38.5" lengthAdjust="spacingAndGlyphs" font-family='"Liberation Sans",sans-serif'>5 Aug 09:00</text>
<circle cx="1472" cy="412" r="2.8" fill="#ececec"/>
</svg>
<div class="abs" style="left:0;top:598px;width:1473px;height:181px;background:#f0f0f0"></div>
<div class="abs" style="left:0;top:611px;width:11px;height:164px;background:linear-gradient(#d8e3ef,#e6edf5)"></div>
<div class="abs" style="left:12px;top:599.5px;width:1443px;height:159.5px;background:#fff;border-left:1px solid #b8b8b8;border-top:1px solid #b8b8b8"></div>
<svg class="abs" style="left:1.5px;top:601.5px" width="7" height="7" viewBox="0 0 7 7"><path d="M1 1l4.5 4.5M5.5 1L1 5.5" stroke="#111" stroke-width="1.3"/></svg>
<span class="t" style="left:-22px;top:741px;width:56px;font-size:8.6px;color:#222;transform:rotate(-90deg);transform-origin:center;text-align:left">Strategy Tester</span>
<span class="lbl" style="left:40px;width:69.5px;top:610.3px">Expert:</span>
<div class="cmb" style="left:114.7px;top:608.4px;width:460.5px;background:#e4e4e4;color:#000">Sell Limit.ex5<i class="chev"></i></div>
<span class="lbl" style="left:40px;width:69.5px;top:632px">Symbol:</span>
<div class="cmb" style="left:114.7px;top:630px;width:235px;background:#fff;color:#000">AUDUSD<i class="chev"></i></div>
<div class="cmb" style="left:355.5px;top:630px;width:90px;background:#fff;color:#000">H1<i class="chev"></i></div>
<span class="lbl" style="left:40px;width:69.5px;top:654.3px">Date:</span>
<div class="cmb" style="left:114.7px;top:652.3px;width:140.5px;background:#e4e4e4;color:#000">Last year<i class="chev"></i></div>
<div class="cmb" style="left:260.5px;top:652.3px;width:90px;background:#fff;color:#8c8c8c">2022.01.01<svg class="abs" style="right:9px;top:3.2px" width="8" height="8" viewBox="0 0 8 8"><rect x="0.5" y="0.5" width="6" height="6.5" rx="1" fill="#f4f4f4" stroke="#c4c4c4" stroke-width="0.7"/></svg><svg class="abs" style="right:3px;top:5.5px" width="5" height="4" viewBox="0 0 5 4"><path d="M0.5 0.5l2 2 2-2z" fill="#b8b8b8"/></svg></div>
<div class="cmb" style="left:355.5px;top:652.3px;width:90px;background:#fff;color:#8c8c8c">2022.08.04<svg class="abs" style="right:9px;top:3.2px" width="8" height="8" viewBox="0 0 8 8"><rect x="0.5" y="0.5" width="6" height="6.5" rx="1" fill="#f4f4f4" stroke="#c4c4c4" stroke-width="0.7"/></svg><svg class="abs" style="right:3px;top:5.5px" width="5" height="4" viewBox="0 0 5 4"><path d="M0.5 0.5l2 2 2-2z" fill="#b8b8b8"/></svg></div>
<span class="lbl" style="left:40px;width:69.5px;top:682.5px">Forward:</span>
<div class="cmb" style="left:114.7px;top:680.4px;width:140.5px;background:#e4e4e4;color:#000">No<i class="chev"></i></div>
<div class="cmb" style="left:260.5px;top:680.4px;width:90px;background:#fff;color:#8c8c8c">2022.05.30<svg class="abs" style="right:9px;top:3.2px" width="8" height="8" viewBox="0 0 8 8"><rect x="0.5" y="0.5" width="6" height="6.5" rx="1" fill="#f4f4f4" stroke="#c4c4c4" stroke-width="0.7"/></svg><svg class="abs" style="right:3px;top:5.5px" width="5" height="4" viewBox="0 0 5 4"><path d="M0.5 0.5l2 2 2-2z" fill="#b8b8b8"/></svg></div>
<span class="lbl" style="left:40px;width:69.5px;top:711px">Delays:</span>
<div class="cmb" style="left:114.7px;top:709px;width:277px;background:#fff;color:#000">Zero latency, ideal execution<i class="chev"></i></div>
<span class="lbl" style="left:40px;width:69.5px;top:733.6px">Modelling:</span>
<div class="cmb" style="left:114.7px;top:731.6px;width:277px;background:#e4e4e4;color:#000">Every tick<i class="chev"></i></div>
<span class="t" style="left:419.5px;top:711px;font-size:8.5px;letter-spacing:-0.14px">select a delay to emulate slippage and requotes during trade execution</span>
<div class="abs" style="left:397.5px;top:735.3px;width:8.5px;height:8.5px;background:#fff;border:1px solid #333"></div>
<span class="t" style="left:408.5px;top:733.8px;font-size:8.5px;letter-spacing:-0.14px">profit in pips for faster calculations</span>
<div class="abs" style="left:581.8px;top:608.4px;width:16.4px;height:15.2px;background:#e6f0fa;border:1px solid #a8c4e0"></div><span class="t" style="left:584.6px;top:610.6px;font-size:6.8px;color:#1f6fb8;font-weight:bold;font-family:'Liberation Mono',monospace;letter-spacing:-.5px">IDE</span>
<div class="abs" style="left:603.8px;top:608.4px;width:16.2px;height:15.2px;background:#e6f0fa;border:1px solid #a8c4e0"></div><svg class="abs" style="left:606.9px;top:611px" width="10" height="10" viewBox="0 0 10 10"><circle cx="5" cy="5" r="3.3" fill="none" stroke="#1f6fb8" stroke-width="1.6" stroke-dasharray="1.5 1.1"/><circle cx="5" cy="5" r="2.6" fill="none" stroke="#1f6fb8" stroke-width="0.9"/><circle cx="5" cy="5" r="1" fill="none" stroke="#1f6fb8" stroke-width="0.7"/></svg>
<div class="abs" style="left:452.2px;top:630px;width:15px;height:15px;background:#f2c218;border:1px solid #c49a00;border-radius:1.5px"></div><span class="t" style="left:457.3px;top:631.8px;font-size:8px;color:#a07800;font-weight:bold">$</span>
<div class="abs" style="left:397.5px;top:709px;width:16.2px;height:15.2px;background:#e6f0fa;border:1px solid #a8c4e0"></div><svg class="abs" style="left:400.2px;top:711.8px" width="11" height="10" viewBox="0 0 11 10"><g stroke="#1f6fb8" stroke-width="0.9" fill="#e6f0fa"><path d="M0.5 2.5h10M0.5 7h10"/><circle cx="7" cy="2.5" r="1.3"/><circle cx="4" cy="7" r="1.3"/></g></svg>
<div class="abs" style="left:1455px;top:600px;width:13px;height:159px;background:#f0f0f0"></div>
<div class="abs" style="left:1458px;top:614px;width:10px;height:101px;background:#cdcdcd"></div>
<svg class="abs" style="left:1459px;top:604px" width="9" height="6" viewBox="0 0 9 6"><path d="M1.5 4.5l3-3 3 3" stroke="#444" stroke-width="1" fill="none"/></svg>
<svg class="abs" style="left:1459px;top:748px" width="9" height="6" viewBox="0 0 9 6"><path d="M1.5 1.5l3 3 3-3" stroke="#444" stroke-width="1" fill="none"/></svg>
<div class="abs" style="left:12px;top:758.5px;width:1456px;height:1.2px;background:#555"></div>
<div class="abs" style="left:66.8px;top:758px;width:47.5px;height:15.5px;background:#fff;border:1px solid #444;border-top:none;border-radius:0 0 2px 2px"></div>
<span class="t" style="left:21.5px;top:760.3px;font-size:9px;color:#8a8a8a">Overview</span>
<span class="t" style="left:74px;top:760.3px;font-size:9px;color:#111">Settings</span>
<span class="t" style="left:121.5px;top:760.3px;font-size:9px;color:#8a8a8a">Inputs</span>
<span class="t" style="left:152.5px;top:760.3px;font-size:9px;color:#8a8a8a">|</span>
<span class="t" style="left:162.5px;top:760.3px;font-size:9px;color:#8a8a8a">Agents</span>
<span class="t" style="left:196.5px;top:760.3px;font-size:9px;color:#8a8a8a">|</span>
<span class="t" style="left:205.5px;top:760.3px;font-size:9px;color:#8a8a8a">Journal</span>
<div class="abs" style="left:1412.5px;top:761px;width:56px;height:13px;background:#8fc854"></div><span class="t" style="left:1431.5px;top:761.5px;font-size:8.8px;color:#111">Start</span>
<div class="abs" style="left:0;top:779px;width:1473px;height:18px;background:#f0f0f0;border-top:1px solid #dcdcdc">
<span class="st" style="left:940.5px">Default</span>
<span class="st" style="left:1038.5px">2022.08.05 01:00</span>
<span class="st" style="left:1113.5px">O: 1.28667</span>
<span class="st" style="left:1168px">H: 1.28698</span>
<span class="st" style="left:1222.5px">L: 1.28628</span>
<span class="st" style="left:1275.5px">C: 1.28640</span>
<span class="st" style="left:1328.5px">V: 908</span>
<span class="st" style="left:1379px;padding-left:20px">97.9 / 0.3 Mb</span>
<svg class="abs" style="left:1385px;top:6px" width="8" height="7" viewBox="0 0 8 7"><path d="M1 6v-1M3 6v-2.5M5 6v-4" stroke="#3ab03a" stroke-width="1.2"/><path d="M7 6v-5.5" stroke="#bbb" stroke-width="1.2"/></svg>
</div>
<div class="abs" style="left:0;top:796.4px;width:1473px;height:1.6px;background:#333"></div>
<div class="menu" style="left:83.9px;top:30.9px;width:108.4px;height:74px">
<div class="it sel" style="top:0.8px;padding-left:21.5px">Indicators<i></i></div>
<div class="it" style="top:18.5px;padding-left:21.5px">Objects<i></i></div>
<div class="it" style="top:36.2px;padding-left:21.5px">Experts<i></i></div>
<div class="it" style="top:53.9px;padding-left:21.5px">Scripts<i></i></div>
</div>
<div class="menu m2" style="left:192.3px;top:31.1px;width:196.3px;height:186.4px">
<div class="it" style="top:0.6px;padding-left:22.9px">Williams' Percent Range</div>
<div class="it" style="top:18.2px;padding-left:22.9px">Volumes</div>
<div class="it" style="top:35.8px;padding-left:22.9px">Variable Index Dynamic Average</div>
<div class="it" style="top:53.3px;padding-left:22.9px">Triple Exponential Moving Average</div>
<div class="it" style="top:70.9px;padding-left:22.9px">Triple Exponential Average</div>
<div class="sep" style="top:91.6px"></div>
<div class="it" style="top:95.6px;padding-left:22.9px">Trend<i></i></div>
<div class="it sel" style="top:113.3px;padding-left:22.9px">Oscillators<i></i></div>
<div class="it" style="top:131.0px;padding-left:22.9px">Volumes<i></i></div>
<div class="it" style="top:148.7px;padding-left:22.9px">Bill Williams<i></i></div>
<div class="it" style="top:166.4px;padding-left:22.9px">Custom<i></i></div>
</div>
<div class="menu" style="left:384.5px;top:143px;width:157.8px;height:268.5px">
<div class="it" style="top:1.50px;padding-left:22.9px">Average True Range</div>
<div class="it" style="top:19.16px;padding-left:22.9px">Bears Power</div>
<div class="it" style="top:36.82px;padding-left:22.9px">Bulls Power</div>
<div class="it" style="top:54.48px;padding-left:22.9px">Chaikin Oscillator</div>
<div class="it" style="top:72.14px;padding-left:22.9px">Commodity Channel Index</div>
<div class="it" style="top:89.80px;padding-left:22.9px">DeMarker</div>
<div class="it" style="top:107.46px;padding-left:22.9px">Force Index</div>
<div class="it" style="top:125.12px;padding-left:22.9px">MACD</div>
<div class="it" style="top:142.78px;padding-left:22.9px">Momentum</div>
<div class="it" style="top:160.44px;padding-left:22.9px">Moving Average of Oscillator</div>
<div class="it" style="top:178.10px;padding-left:22.9px">Relative Strength Index</div>
<div class="it" style="top:195.76px;padding-left:22.9px">Relative Vigor Index</div>
<div class="it" style="top:213.42px;padding-left:22.9px">Stochastic Oscillator</div>
<div class="it" style="top:231.08px;padding-left:22.9px">Triple Exponential Average</div>
<div class="it" style="top:248.74px;padding-left:22.9px">Williams' Percent Range</div>
</div>
</body></html>
